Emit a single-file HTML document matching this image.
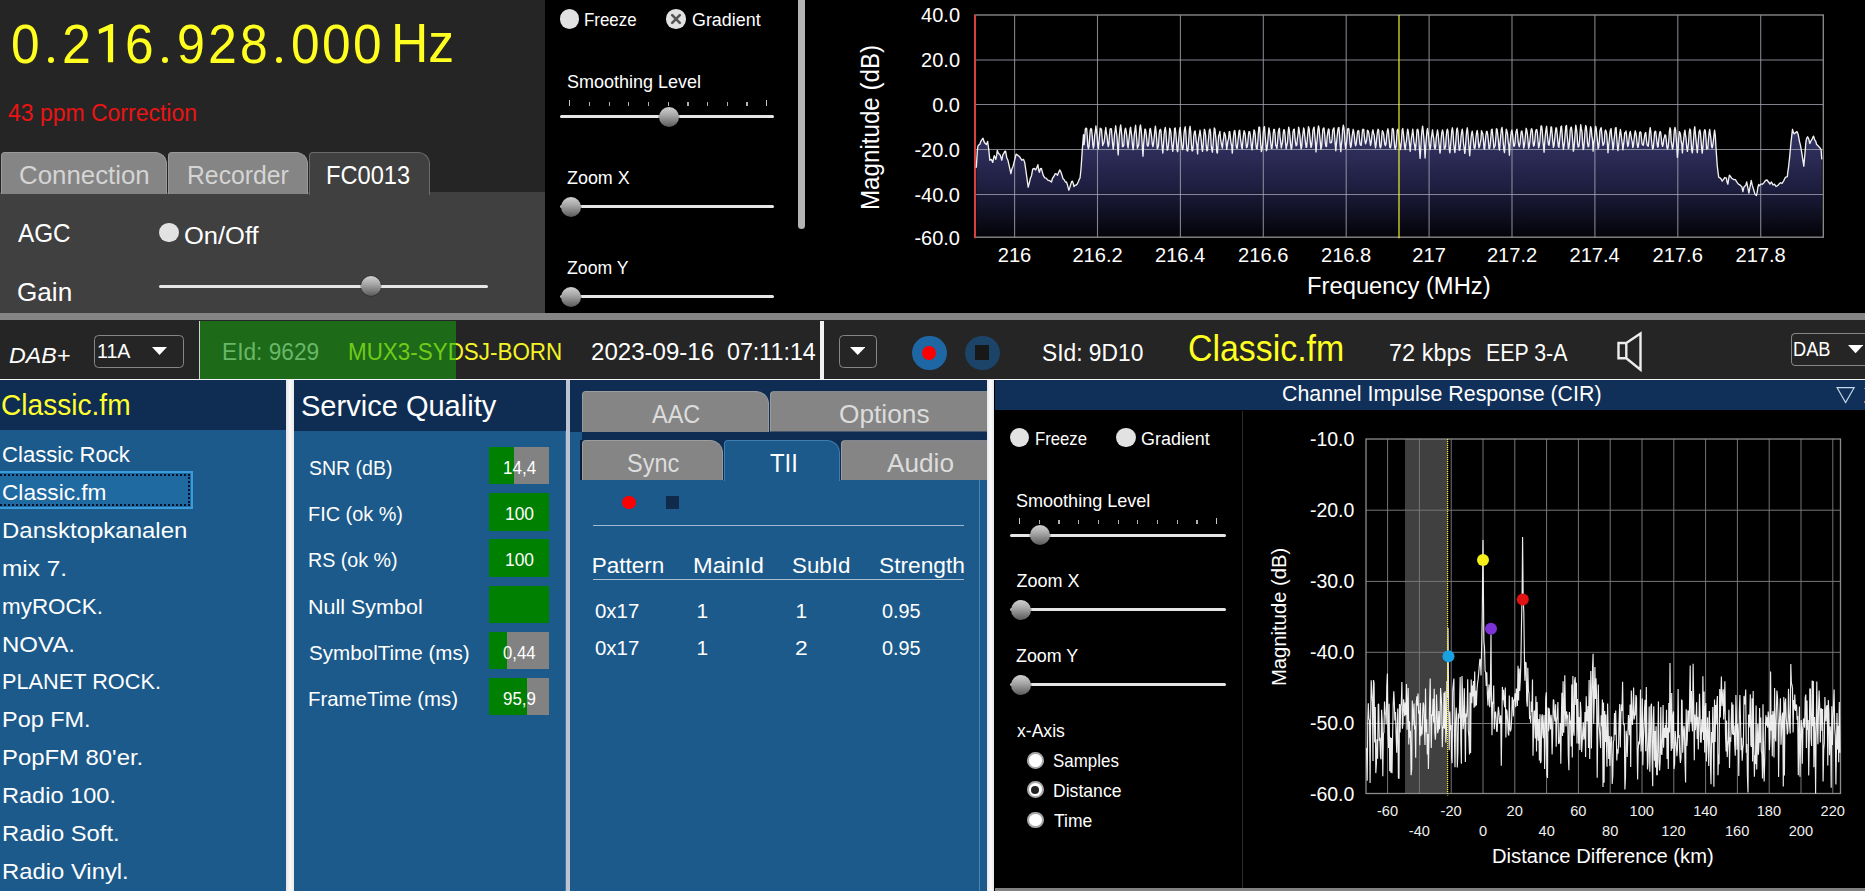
<!DOCTYPE html>
<html><head><meta charset="utf-8"><title>DAB</title>
<style>
html,body{margin:0;padding:0;background:#000;}
body{width:1865px;height:891px;overflow:hidden;position:relative;font-family:"Liberation Sans",sans-serif;}
#r{position:absolute;left:0;top:0;width:1865px;height:891px;overflow:hidden;}
#r div,#r span,#r svg{position:absolute;}
#r span{white-space:pre;display:block;}
</style></head><body><div id="r">
<div style="left:0.00px;top:0.00px;width:1865.00px;height:891.00px;background:#000;"></div>
<div style="left:0.00px;top:0.00px;width:545.00px;height:192.00px;background:#252525;"></div>
<div style="left:0.00px;top:192.00px;width:545.00px;height:121.00px;background:#404040;"></div>
<div style="left:0.00px;top:313.00px;width:1865.00px;height:7.20px;background:#858585;"></div>
<div style="left:0.00px;top:320.00px;width:1865.00px;height:59.20px;background:#252525;"></div>
<div style="left:0.00px;top:379.00px;width:1865.00px;height:1.30px;background:#f4f4f4;"></div>
<span style="left:10.59px;top:16.69px;font-size:55.00px;line-height:55.00px;color:#ffff20;transform:scaleX(0.9356);transform-origin:0 0;">0</span>
<div style="left:47.80px;top:57.10px;width:6.2px;height:6.2px;border-radius:50%;background:#ffff20"></div>
<span style="left:62.41px;top:16.69px;font-size:55.00px;line-height:55.00px;color:#ffff20;transform:scaleX(0.9431);transform-origin:0 0;">2</span>
<svg style="left:90px;top:15px" width="40" height="55" viewBox="90 15 40 55"><polygon points="110.7,24.1 113.15,24.1 113.15,62.3 107.9,62.3 107.9,30.4 99.1,33.9 98.6,29.6" fill="#ffff20"/></svg>
<span style="left:124.68px;top:16.69px;font-size:55.00px;line-height:55.00px;color:#ffff20;transform:scaleX(0.9345);transform-origin:0 0;">6</span>
<div style="left:162.00px;top:57.10px;width:6.2px;height:6.2px;border-radius:50%;background:#ffff20"></div>
<span style="left:177.10px;top:16.69px;font-size:55.00px;line-height:55.00px;color:#ffff20;transform:scaleX(0.9110);transform-origin:0 0;">9</span>
<span style="left:207.81px;top:16.69px;font-size:55.00px;line-height:55.00px;color:#ffff20;transform:scaleX(0.9431);transform-origin:0 0;">2</span>
<span style="left:239.61px;top:16.69px;font-size:55.00px;line-height:55.00px;color:#ffff20;transform:scaleX(0.9033);transform-origin:0 0;">8</span>
<div style="left:276.20px;top:57.10px;width:6.2px;height:6.2px;border-radius:50%;background:#ffff20"></div>
<span style="left:290.79px;top:16.69px;font-size:55.00px;line-height:55.00px;color:#ffff20;transform:scaleX(0.9356);transform-origin:0 0;">0</span>
<span style="left:321.99px;top:16.69px;font-size:55.00px;line-height:55.00px;color:#ffff20;transform:scaleX(0.9356);transform-origin:0 0;">0</span>
<span style="left:353.19px;top:16.69px;font-size:55.00px;line-height:55.00px;color:#ffff20;transform:scaleX(0.9356);transform-origin:0 0;">0</span>
<span style="left:390.77px;top:17.03px;font-size:54.60px;line-height:54.60px;color:#ffff20;transform:scaleX(0.9460);transform-origin:0 0;">Hz</span>
<span style="left:7.94px;top:102.37px;font-size:23.55px;line-height:23.55px;color:#ea1414;transform:scaleX(0.9756);transform-origin:0 0;">43 ppm Correction</span>
<div style="left:1.00px;top:152.00px;width:165.50px;height:41.50px;background:#858585;border:1px solid #9a9a9a;border-bottom:none;border-radius:4px 12px 0 0;box-sizing:border-box;"></div>
<div style="left:168.00px;top:152.00px;width:139.50px;height:41.50px;background:#858585;border:1px solid #9a9a9a;border-bottom:none;border-radius:4px 12px 0 0;box-sizing:border-box;"></div>
<div style="left:309.00px;top:152.00px;width:121.00px;height:42.50px;background:#404040;border:1px solid #6a6a6a;border-bottom:none;border-radius:4px 12px 0 0;box-sizing:border-box;"></div>
<span style="left:18.91px;top:163.35px;font-size:25.58px;line-height:25.58px;color:#d4d4d4;transform:scaleX(1.0103);transform-origin:0 0;">Connection</span>
<span style="left:186.52px;top:163.35px;font-size:25.58px;line-height:25.58px;color:#d4d4d4;transform:scaleX(0.9675);transform-origin:0 0;">Recorder</span>
<span style="left:325.71px;top:163.35px;font-size:25.58px;line-height:25.58px;color:#fff;transform:scaleX(0.9241);transform-origin:0 0;">FC0013</span>
<span style="left:18.00px;top:220.80px;font-size:25.87px;line-height:25.87px;color:#fff;transform:scaleX(0.9400);transform-origin:0 0;">AGC</span>
<div style="left:159.3px;top:222.8px;width:19.6px;height:19.6px;border-radius:50%;background:#e2e2e2"></div>
<span style="left:184.25px;top:223.83px;font-size:24.42px;line-height:24.42px;color:#fff;transform:scaleX(1.0447);transform-origin:0 0;">On/Off</span>
<span style="left:17.49px;top:279.74px;font-size:25.00px;line-height:25.00px;color:#fff;transform:scaleX(1.0446);transform-origin:0 0;">Gain</span>
<div style="left:159.30px;top:284.70px;width:329.20px;height:3px;border-radius:2px;background:#e6e6e6"></div>
<div style="left:361.20px;top:276.20px;width:20px;height:20px;border-radius:50%;background:linear-gradient(180deg,#d0d0d0 0%,#a8a8a8 40%,#5a5a5a 100%);box-shadow:0 0 0 0.6px rgba(0,0,0,.35)"></div>
<div style="left:559.70px;top:9.20px;width:19.60px;height:19.60px;border-radius:50%;background:#e2e2e2;"></div>
<span style="left:584.25px;top:11.17px;font-size:18.46px;line-height:18.46px;color:#fff;transform:scaleX(0.9168);transform-origin:0 0;">Freeze</span>
<div style="left:666.20px;top:9.20px;width:19.60px;height:19.60px;border-radius:50%;background:#e2e2e2;"></div>
<svg style="left:669px;top:12px" width="14" height="14" viewBox="0 0 14 14"><path d="M3.2 3.2L10.8 10.8M10.8 3.2L3.2 10.8" stroke="#555" stroke-width="2.6" stroke-linecap="round"/></svg>
<span style="left:691.70px;top:11.17px;font-size:18.46px;line-height:18.46px;color:#fff;transform:scaleX(0.9702);transform-origin:0 0;">Gradient</span>
<span style="left:566.69px;top:73.15px;font-size:18.60px;line-height:18.60px;color:#fff;transform:scaleX(0.9665);transform-origin:0 0;">Smoothing Level</span>
<div style="left:560.30px;top:115.00px;width:213.50px;height:3px;border-radius:2px;background:#e6e6e6"></div>
<div style="left:569.15px;top:100.30px;width:1.3px;height:5.8px;background:#c8c8c8"></div>
<div style="left:588.83px;top:102.10px;width:1.3px;height:4.0px;background:#b0b0b0"></div>
<div style="left:608.51px;top:102.10px;width:1.3px;height:4.0px;background:#b0b0b0"></div>
<div style="left:628.19px;top:102.10px;width:1.3px;height:4.0px;background:#b0b0b0"></div>
<div style="left:647.87px;top:102.10px;width:1.3px;height:4.0px;background:#b0b0b0"></div>
<div style="left:667.55px;top:102.10px;width:1.3px;height:4.0px;background:#b0b0b0"></div>
<div style="left:687.23px;top:102.10px;width:1.3px;height:4.0px;background:#b0b0b0"></div>
<div style="left:706.91px;top:102.10px;width:1.3px;height:4.0px;background:#b0b0b0"></div>
<div style="left:726.59px;top:102.10px;width:1.3px;height:4.0px;background:#b0b0b0"></div>
<div style="left:746.27px;top:102.10px;width:1.3px;height:4.0px;background:#b0b0b0"></div>
<div style="left:765.95px;top:100.30px;width:1.3px;height:5.8px;background:#c8c8c8"></div>
<div style="left:658.60px;top:106.50px;width:20px;height:20px;border-radius:50%;background:linear-gradient(180deg,#d0d0d0 0%,#a8a8a8 40%,#5a5a5a 100%);box-shadow:0 0 0 0.6px rgba(0,0,0,.35)"></div>
<span style="left:566.76px;top:169.14px;font-size:18.02px;line-height:18.02px;color:#fff;transform:scaleX(0.9939);transform-origin:0 0;">Zoom X</span>
<div style="left:560.30px;top:205.00px;width:213.30px;height:3px;border-radius:2px;background:#e6e6e6"></div>
<div style="left:560.50px;top:196.50px;width:20px;height:20px;border-radius:50%;background:linear-gradient(180deg,#d0d0d0 0%,#a8a8a8 40%,#5a5a5a 100%);box-shadow:0 0 0 0.6px rgba(0,0,0,.35)"></div>
<span style="left:566.77px;top:259.34px;font-size:18.02px;line-height:18.02px;color:#fff;transform:scaleX(0.9819);transform-origin:0 0;">Zoom Y</span>
<div style="left:560.30px;top:295.00px;width:213.30px;height:3px;border-radius:2px;background:#e6e6e6"></div>
<div style="left:560.50px;top:286.50px;width:20px;height:20px;border-radius:50%;background:linear-gradient(180deg,#d0d0d0 0%,#a8a8a8 40%,#5a5a5a 100%);box-shadow:0 0 0 0.6px rgba(0,0,0,.35)"></div>
<div style="left:798px;top:-8px;width:7px;height:237px;border-radius:4px;background:#b4b4b4"></div>
<svg style="left:0;top:0" width="1865" height="320" viewBox="0 0 1865 320"><defs><linearGradient id="g1" x1="0" y1="126" x2="0" y2="237" gradientUnits="userSpaceOnUse"><stop offset="0" stop-color="#38386c"/><stop offset="0.55" stop-color="#1e1e40"/><stop offset="1" stop-color="#030308"/></linearGradient></defs><polygon points="976.3,237.2 976.3,167.7 977.3,151.1 977.9,146.3 978.5,145.1 979.7,144.5 980.8,141.4 981.9,139.6 983.0,138.3 984.2,142.0 985.3,143.6 986.4,144.6 987.6,141.4 988.2,145.7 988.8,149.6 989.3,154.9 989.8,160.2 991.3,159.4 992.8,162.4 993.6,158.0 994.3,155.6 995.1,157.5 995.8,159.4 996.6,155.7 997.3,150.4 998.5,153.6 999.6,154.1 1000.7,156.6 1001.8,160.2 1002.8,154.9 1003.8,153.4 1004.7,151.3 1005.6,151.1 1006.7,157.4 1007.9,160.2 1010.9,173.7 1012.0,168.7 1013.1,166.2 1016.1,154.1 1018.0,155.4 1019.9,157.1 1021.8,160.2 1023.6,159.4 1024.8,162.9 1025.9,170.7 1028.2,187.2 1029.3,183.1 1030.4,178.2 1031.5,175.7 1032.7,169.2 1034.2,168.4 1035.7,169.9 1036.8,167.5 1037.9,164.7 1038.7,170.2 1039.4,172.2 1040.4,168.7 1041.4,168.4 1042.3,171.9 1043.2,175.2 1044.7,177.8 1046.2,178.2 1047.7,180.1 1049.2,180.5 1050.3,181.1 1051.5,182.0 1052.6,178.0 1053.7,176.7 1054.5,175.1 1055.2,173.7 1056.4,173.9 1057.5,175.2 1058.6,172.5 1059.7,169.9 1060.9,172.0 1062.0,175.2 1063.1,178.9 1064.2,179.7 1065.4,182.0 1066.5,182.0 1067.6,185.3 1068.8,190.2 1069.9,187.2 1071.0,183.5 1071.8,181.3 1072.5,181.2 1073.3,183.6 1074.0,186.5 1075.2,185.1 1076.3,185.0 1077.4,183.8 1078.5,181.2 1079.3,179.1 1080.0,178.2 1080.6,172.8 1081.1,167.7 1082.3,149.6 1083.5,134.6 1084.1,144.6 1084.7,138.9 1085.3,129.2 1086.0,128.1 1086.6,128.3 1087.2,135.5 1087.8,146.3 1088.4,148.7 1089.1,146.0 1089.7,136.8 1090.3,129.9 1090.9,128.4 1091.5,128.9 1092.2,135.8 1092.8,144.7 1093.4,148.2 1094.0,145.1 1094.6,135.9 1095.3,131.4 1095.9,126.0 1096.5,131.2 1097.1,136.0 1097.7,145.4 1098.4,148.8 1099.0,141.8 1099.6,134.9 1100.2,128.2 1100.8,128.6 1101.5,129.4 1102.1,137.8 1102.7,145.6 1103.3,143.9 1103.9,142.8 1104.6,138.0 1105.2,131.9 1105.8,127.5 1106.4,133.0 1107.0,135.8 1107.7,143.6 1108.3,146.6 1108.9,144.4 1109.5,135.1 1110.1,129.0 1110.8,128.6 1111.4,128.8 1112.0,136.7 1112.6,144.0 1113.2,149.1 1113.9,144.2 1114.5,134.5 1115.1,130.9 1115.7,125.8 1116.3,131.2 1117.0,136.6 1117.6,147.0 1118.2,154.9 1118.8,144.4 1119.4,134.9 1120.1,128.0 1120.7,125.0 1121.3,130.3 1121.9,136.6 1122.5,146.6 1123.2,146.6 1123.8,145.2 1124.4,135.3 1125.0,129.5 1125.6,128.2 1126.3,132.2 1126.9,136.8 1127.5,144.8 1128.1,147.9 1128.7,142.1 1129.4,135.4 1130.0,129.2 1130.6,127.1 1131.2,132.7 1131.8,136.9 1132.5,145.5 1133.1,149.7 1133.7,144.7 1134.3,134.3 1134.9,130.7 1135.6,125.3 1136.2,132.5 1136.8,140.1 1137.4,148.2 1138.0,146.6 1138.7,145.1 1139.3,134.4 1139.9,127.4 1140.5,125.0 1141.1,129.4 1141.8,137.9 1142.4,148.1 1143.0,156.2 1143.6,144.5 1144.2,137.4 1144.9,129.1 1145.5,129.4 1146.1,133.0 1146.7,138.6 1147.3,145.6 1148.0,146.1 1148.6,144.4 1149.2,136.4 1149.8,129.4 1150.4,128.4 1151.1,133.0 1151.7,137.9 1152.3,144.2 1152.9,146.7 1153.5,144.0 1154.2,137.2 1154.8,130.8 1155.4,126.2 1156.0,131.2 1156.6,138.4 1157.3,148.6 1157.9,147.6 1158.5,145.8 1159.1,134.9 1159.7,130.4 1160.4,129.3 1161.0,131.2 1161.6,140.9 1162.2,147.3 1162.8,153.0 1163.5,144.5 1164.1,135.0 1164.7,129.8 1165.3,127.5 1165.9,131.9 1166.6,142.4 1167.2,150.1 1167.8,149.7 1168.4,145.6 1169.0,138.0 1169.7,128.3 1170.3,129.4 1170.9,132.8 1171.5,140.9 1172.1,146.9 1172.8,151.3 1173.4,145.2 1174.0,138.2 1174.6,128.5 1175.2,128.0 1175.9,133.8 1176.5,142.3 1177.1,150.4 1177.7,151.7 1178.3,144.1 1179.0,136.2 1179.6,129.6 1180.2,127.4 1180.8,134.5 1181.4,141.2 1182.1,148.3 1182.7,149.7 1183.3,146.7 1183.9,135.1 1184.5,129.6 1185.2,126.8 1185.8,132.2 1186.4,143.3 1187.0,150.6 1187.6,151.1 1188.3,147.3 1188.9,137.6 1189.5,129.1 1190.1,126.3 1190.7,132.0 1191.4,144.0 1192.0,150.8 1192.6,150.8 1193.2,146.2 1193.8,135.9 1194.5,131.7 1195.1,130.9 1195.7,135.9 1196.3,142.2 1196.9,145.4 1197.6,153.9 1198.2,142.8 1198.8,137.4 1199.4,134.5 1200.0,130.1 1200.7,135.4 1201.3,140.8 1201.9,148.2 1202.5,151.4 1203.1,146.2 1203.8,135.0 1204.4,129.3 1205.0,131.0 1205.6,135.1 1206.2,145.2 1206.9,150.8 1207.5,150.2 1208.1,143.5 1208.7,137.1 1209.3,130.5 1210.0,129.0 1210.6,132.8 1211.2,145.5 1211.8,149.3 1212.4,152.2 1213.1,144.9 1213.7,135.7 1214.3,128.0 1214.9,129.1 1215.5,134.5 1216.2,141.6 1216.8,152.2 1217.4,153.1 1218.0,145.3 1218.6,136.0 1219.3,134.0 1219.9,131.5 1220.5,138.4 1221.1,142.3 1221.7,145.4 1222.4,148.0 1223.0,141.6 1223.6,138.5 1224.2,132.4 1224.8,133.3 1225.5,136.1 1226.1,142.5 1226.7,149.4 1227.3,145.6 1227.9,141.1 1228.6,138.7 1229.2,131.6 1229.8,131.7 1230.4,137.6 1231.0,143.0 1231.7,146.0 1232.3,153.1 1232.9,144.0 1233.5,136.6 1234.1,131.5 1234.8,130.5 1235.4,135.0 1236.0,144.5 1236.6,148.1 1237.2,148.3 1237.9,141.8 1238.5,135.9 1239.1,130.8 1239.7,130.3 1240.3,137.5 1241.0,142.4 1241.6,147.1 1242.2,148.8 1242.8,141.7 1243.4,135.6 1244.1,130.7 1244.7,132.2 1245.3,135.7 1245.9,142.0 1246.5,147.7 1247.2,146.8 1247.8,143.1 1248.4,135.4 1249.0,131.7 1249.6,131.6 1250.3,135.2 1250.9,141.9 1251.5,147.5 1252.1,149.8 1252.7,142.5 1253.4,135.9 1254.0,129.9 1254.6,131.1 1255.2,134.9 1255.8,143.2 1256.5,148.5 1257.1,148.8 1257.7,143.6 1258.3,133.7 1258.9,127.2 1259.6,127.1 1260.2,135.3 1260.8,145.4 1261.4,151.6 1262.0,149.5 1262.7,143.2 1263.3,132.3 1263.9,127.9 1264.5,126.6 1265.1,135.7 1265.8,142.7 1266.4,150.7 1267.0,148.9 1267.6,143.7 1268.2,135.6 1268.9,127.9 1269.5,130.6 1270.1,135.6 1270.7,142.1 1271.3,148.2 1272.0,148.2 1272.6,142.3 1273.2,133.9 1273.8,129.4 1274.4,129.5 1275.1,134.5 1275.7,145.1 1276.3,146.3 1276.9,148.4 1277.5,143.1 1278.2,132.7 1278.8,129.8 1279.4,128.3 1280.0,137.0 1280.6,141.2 1281.3,147.9 1281.9,144.9 1282.5,142.4 1283.1,134.7 1283.7,129.8 1284.4,129.9 1285.0,135.0 1285.6,143.2 1286.2,148.9 1286.8,145.5 1287.5,142.3 1288.1,132.6 1288.7,127.2 1289.3,130.0 1289.9,135.8 1290.6,144.4 1291.2,149.1 1291.8,148.0 1292.4,140.6 1293.0,132.0 1293.7,129.3 1294.3,129.2 1294.9,137.3 1295.5,142.5 1296.1,145.8 1296.8,145.2 1297.4,138.5 1298.0,134.6 1298.6,127.2 1299.2,130.0 1299.9,135.3 1300.5,144.0 1301.1,148.8 1301.7,146.9 1302.3,138.3 1303.0,133.2 1303.6,128.0 1304.2,129.6 1304.8,136.5 1305.4,141.9 1306.1,147.3 1306.7,147.0 1307.3,139.3 1307.9,132.2 1308.5,126.6 1309.2,129.0 1309.8,136.1 1310.4,142.6 1311.0,147.4 1311.6,145.8 1312.3,139.4 1312.9,130.6 1313.5,128.2 1314.1,127.2 1314.7,134.8 1315.4,142.1 1316.0,151.9 1316.6,144.9 1317.2,139.5 1317.8,130.3 1318.5,125.9 1319.1,128.4 1319.7,135.9 1320.3,142.0 1320.9,149.3 1321.6,146.4 1322.2,138.6 1322.8,129.8 1323.4,128.1 1324.0,128.0 1324.7,134.5 1325.3,142.9 1325.9,146.3 1326.5,146.5 1327.1,137.6 1327.8,132.3 1328.4,129.0 1329.0,129.4 1329.6,137.7 1330.2,142.9 1330.9,142.7 1331.5,142.5 1332.1,139.1 1332.7,130.3 1333.3,128.9 1334.0,127.9 1334.6,135.8 1335.2,144.0 1335.8,150.8 1336.4,144.0 1337.1,137.0 1337.7,130.9 1338.3,128.0 1338.9,127.4 1339.5,134.7 1340.2,145.2 1340.8,151.6 1341.4,144.3 1342.0,140.2 1342.6,129.8 1343.3,125.2 1343.9,127.4 1344.5,134.3 1345.1,144.1 1345.7,148.6 1346.4,143.9 1347.0,137.7 1347.6,129.2 1348.2,128.5 1348.8,128.8 1349.5,135.2 1350.1,144.0 1350.7,147.4 1351.3,145.2 1351.9,138.1 1352.6,132.8 1353.2,129.3 1353.8,132.2 1354.4,136.4 1355.0,142.9 1355.7,145.9 1356.3,143.3 1356.9,137.7 1357.5,132.0 1358.1,130.5 1358.8,131.1 1359.4,138.0 1360.0,144.2 1360.6,145.0 1361.2,145.4 1361.9,137.3 1362.5,130.0 1363.1,129.3 1363.7,129.5 1364.3,135.6 1365.0,141.3 1365.6,143.9 1366.2,141.8 1366.8,139.1 1367.4,130.3 1368.1,130.8 1368.7,132.6 1369.3,136.5 1369.9,141.0 1370.5,145.5 1371.2,142.4 1371.8,136.9 1372.4,131.7 1373.0,129.8 1373.6,133.5 1374.3,135.9 1374.9,143.1 1375.5,147.8 1376.1,144.8 1376.7,138.6 1377.4,131.9 1378.0,129.3 1378.6,130.0 1379.2,136.3 1379.8,146.0 1380.5,147.9 1381.1,145.7 1381.7,137.0 1382.3,130.7 1382.9,131.6 1383.6,133.9 1384.2,139.6 1384.8,144.3 1385.4,145.7 1386.0,143.9 1386.7,136.3 1387.3,131.2 1387.9,128.8 1388.5,131.7 1389.1,139.3 1389.8,147.4 1390.4,147.8 1391.0,145.4 1391.6,139.5 1392.2,129.1 1392.9,128.4 1393.5,130.2 1394.1,139.7 1394.7,147.0 1395.3,149.2 1396.0,146.5 1396.6,139.5 1397.2,130.3 1397.8,129.2 1398.4,131.3 1399.1,140.3 1399.7,144.7 1400.3,149.6 1400.9,146.8 1401.5,140.0 1402.2,129.9 1402.8,128.5 1403.4,133.3 1404.0,139.7 1404.6,147.0 1405.3,149.5 1405.9,143.7 1406.5,140.5 1407.1,133.5 1407.7,129.1 1408.4,132.2 1409.0,138.5 1409.6,145.0 1410.2,151.3 1410.8,145.0 1411.5,137.6 1412.1,134.7 1412.7,129.1 1413.3,133.7 1413.9,141.8 1414.6,145.2 1415.2,150.1 1415.8,146.1 1416.4,139.2 1417.0,130.0 1417.7,129.3 1418.3,131.4 1418.9,139.0 1419.5,150.1 1420.1,158.4 1420.8,147.6 1421.4,137.2 1422.0,130.4 1422.6,126.1 1423.2,130.7 1423.9,138.7 1424.5,147.7 1425.1,158.0 1425.7,146.2 1426.3,138.5 1427.0,130.6 1427.6,128.5 1428.2,132.4 1428.8,139.3 1429.4,145.3 1430.1,149.5 1430.7,145.9 1431.3,138.4 1431.9,134.4 1432.5,129.8 1433.2,135.4 1433.8,139.4 1434.4,146.9 1435.0,149.1 1435.6,146.8 1436.3,137.0 1436.9,133.7 1437.5,129.9 1438.1,133.4 1438.7,140.6 1439.4,147.3 1440.0,153.1 1440.6,147.8 1441.2,138.8 1441.8,132.8 1442.5,130.0 1443.1,132.3 1443.7,139.6 1444.3,148.9 1444.9,148.6 1445.6,146.5 1446.2,136.8 1446.8,131.0 1447.4,129.1 1448.0,131.4 1448.7,141.4 1449.3,149.8 1449.9,152.8 1450.5,146.9 1451.1,139.3 1451.8,130.3 1452.4,127.8 1453.0,131.6 1453.6,142.3 1454.2,148.3 1454.9,152.5 1455.5,146.5 1456.1,137.2 1456.7,129.4 1457.3,128.0 1458.0,132.7 1458.6,142.7 1459.2,150.1 1459.8,150.2 1460.4,145.0 1461.1,136.3 1461.7,131.6 1462.3,129.2 1462.9,134.0 1463.5,143.0 1464.2,148.3 1464.8,153.4 1465.4,148.3 1466.0,138.6 1466.6,131.3 1467.3,127.8 1467.9,132.8 1468.5,140.6 1469.1,148.9 1469.7,155.8 1470.4,146.7 1471.0,138.5 1471.6,133.6 1472.2,131.1 1472.8,134.9 1473.5,141.1 1474.1,147.6 1474.7,148.6 1475.3,146.3 1475.9,138.0 1476.6,132.7 1477.2,130.4 1477.8,134.2 1478.4,143.1 1479.0,147.9 1479.7,145.9 1480.3,142.5 1480.9,139.7 1481.5,130.7 1482.1,132.2 1482.8,133.7 1483.4,139.8 1484.0,148.4 1484.6,149.2 1485.2,142.3 1485.9,135.4 1486.5,131.5 1487.1,131.4 1487.7,134.6 1488.3,140.2 1489.0,148.5 1489.6,148.4 1490.2,144.9 1490.8,137.9 1491.4,130.0 1492.1,129.1 1492.7,135.1 1493.3,140.4 1493.9,148.2 1494.5,147.0 1495.2,145.4 1495.8,138.1 1496.4,128.8 1497.0,129.1 1497.6,133.1 1498.3,139.8 1498.9,147.5 1499.5,150.0 1500.1,143.0 1500.7,135.8 1501.4,129.3 1502.0,127.4 1502.6,132.5 1503.2,142.4 1503.8,149.3 1504.5,152.5 1505.1,144.8 1505.7,135.6 1506.3,129.1 1506.9,130.9 1507.6,134.3 1508.2,142.1 1508.8,145.4 1509.4,155.3 1510.0,144.0 1510.7,136.6 1511.3,131.9 1511.9,129.9 1512.5,133.6 1513.1,139.6 1513.8,146.2 1514.4,146.0 1515.0,143.1 1515.6,135.0 1516.2,131.1 1516.9,129.1 1517.5,133.3 1518.1,141.2 1518.7,144.7 1519.3,146.7 1520.0,143.7 1520.6,137.0 1521.2,131.8 1521.8,130.9 1522.4,133.3 1523.1,140.7 1523.7,148.1 1524.3,145.8 1524.9,141.3 1525.5,134.2 1526.2,128.3 1526.8,130.2 1527.4,134.1 1528.0,140.8 1528.6,148.2 1529.3,146.0 1529.9,141.2 1530.5,134.7 1531.1,129.6 1531.7,128.7 1532.4,131.5 1533.0,142.2 1533.6,146.2 1534.2,145.4 1534.8,140.7 1535.5,132.5 1536.1,129.8 1536.7,129.5 1537.3,132.3 1537.9,140.0 1538.6,147.8 1539.2,146.1 1539.8,141.9 1540.4,133.2 1541.0,126.0 1541.7,126.2 1542.3,131.6 1542.9,141.1 1543.5,146.3 1544.1,152.2 1544.8,141.1 1545.4,134.4 1546.0,129.2 1546.6,126.3 1547.2,133.1 1547.9,140.3 1548.5,145.0 1549.1,145.2 1549.7,140.1 1550.3,134.6 1551.0,126.9 1551.6,127.2 1552.2,134.0 1552.8,142.0 1553.4,147.3 1554.1,145.3 1554.7,138.9 1555.3,133.0 1555.9,127.9 1556.5,127.9 1557.2,134.4 1557.8,141.4 1558.4,146.9 1559.0,147.3 1559.6,139.9 1560.3,133.2 1560.9,126.7 1561.5,126.1 1562.1,133.0 1562.7,143.3 1563.4,149.3 1564.0,146.1 1564.6,141.0 1565.2,133.6 1565.8,126.4 1566.5,125.5 1567.1,135.0 1567.7,140.3 1568.3,148.5 1568.9,147.6 1569.6,141.2 1570.2,130.6 1570.8,127.7 1571.4,127.1 1572.0,131.8 1572.7,141.3 1573.3,151.2 1573.9,149.0 1574.5,142.1 1575.1,133.6 1575.8,125.1 1576.4,128.3 1577.0,133.1 1577.6,143.6 1578.2,147.1 1578.9,146.3 1579.5,141.2 1580.1,132.6 1580.7,124.7 1581.3,128.4 1582.0,132.1 1582.6,143.6 1583.2,149.6 1583.8,148.0 1584.4,140.4 1585.1,130.8 1585.7,125.5 1586.3,127.1 1586.9,132.9 1587.5,143.0 1588.2,146.9 1588.8,146.1 1589.4,139.5 1590.0,132.7 1590.6,126.6 1591.3,128.6 1591.9,136.1 1592.5,139.9 1593.1,151.1 1593.7,143.6 1594.4,139.4 1595.0,132.0 1595.6,126.3 1596.2,128.2 1596.8,134.4 1597.5,141.6 1598.1,148.8 1598.7,147.3 1599.3,141.4 1599.9,131.1 1600.6,128.6 1601.2,127.7 1601.8,133.4 1602.4,140.9 1603.0,145.5 1603.7,144.4 1604.3,141.9 1604.9,132.5 1605.5,130.0 1606.1,131.1 1606.8,134.7 1607.4,144.5 1608.0,152.8 1608.6,145.9 1609.2,140.9 1609.9,132.9 1610.5,129.5 1611.1,128.6 1611.7,137.3 1612.3,141.5 1613.0,149.7 1613.6,145.9 1614.2,138.8 1614.8,134.4 1615.4,128.0 1616.1,127.6 1616.7,136.9 1617.3,144.9 1617.9,150.6 1618.5,146.7 1619.2,139.5 1619.8,133.1 1620.4,129.5 1621.0,133.3 1621.6,138.6 1622.3,143.9 1622.9,149.8 1623.5,145.2 1624.1,140.2 1624.7,132.8 1625.4,133.1 1626.0,131.0 1626.6,135.7 1627.2,142.1 1627.8,146.6 1628.5,144.5 1629.1,138.2 1629.7,133.1 1630.3,131.4 1630.9,135.0 1631.6,139.2 1632.2,141.8 1632.8,147.5 1633.4,145.8 1634.0,140.2 1634.7,133.6 1635.3,130.8 1635.9,133.1 1636.5,136.9 1637.1,143.6 1637.8,147.4 1638.4,146.1 1639.0,141.0 1639.6,132.7 1640.2,131.8 1640.9,132.6 1641.5,138.8 1642.1,144.0 1642.7,144.9 1643.3,145.3 1644.0,140.1 1644.6,136.1 1645.2,133.1 1645.8,132.5 1646.4,139.8 1647.1,145.0 1647.7,145.9 1648.3,146.2 1648.9,139.8 1649.5,132.2 1650.2,127.7 1650.8,131.8 1651.4,139.0 1652.0,144.5 1652.6,148.9 1653.3,148.1 1653.9,141.3 1654.5,133.0 1655.1,131.1 1655.7,131.5 1656.4,137.3 1657.0,142.7 1657.6,147.0 1658.2,146.8 1658.8,139.0 1659.5,133.6 1660.1,131.4 1660.7,132.6 1661.3,137.9 1661.9,143.8 1662.6,146.4 1663.2,144.3 1663.8,138.9 1664.4,137.1 1665.0,134.8 1665.7,135.4 1666.3,140.6 1666.9,147.3 1667.5,149.0 1668.1,147.3 1668.8,140.3 1669.4,131.5 1670.0,127.8 1670.6,130.0 1671.2,140.9 1671.9,145.5 1672.5,149.0 1673.1,146.5 1673.7,140.1 1674.3,130.9 1675.0,127.5 1675.6,129.9 1676.2,137.9 1676.8,145.9 1677.4,157.4 1678.1,149.4 1678.7,138.5 1679.3,131.7 1679.9,132.5 1680.5,134.6 1681.2,141.5 1681.8,144.3 1682.4,152.9 1683.0,144.2 1683.6,140.1 1684.3,133.2 1684.9,130.2 1685.5,134.8 1686.1,138.7 1686.7,147.3 1687.4,151.4 1688.0,147.4 1688.6,141.7 1689.2,132.7 1689.8,129.0 1690.5,130.4 1691.1,140.3 1691.7,150.4 1692.3,152.9 1692.9,147.5 1693.6,139.1 1694.2,130.3 1694.8,126.8 1695.4,133.4 1696.0,139.6 1696.7,147.2 1697.3,152.6 1697.9,146.6 1698.5,138.2 1699.1,131.8 1699.8,129.9 1700.4,132.6 1701.0,139.8 1701.6,147.4 1702.2,153.1 1702.9,147.2 1703.5,139.3 1704.1,132.2 1704.7,129.8 1705.3,130.5 1706.0,138.8 1706.6,149.0 1707.2,148.3 1707.8,148.4 1708.4,140.4 1709.1,132.7 1709.7,129.4 1710.3,134.2 1710.9,138.4 1711.5,146.0 1712.2,147.9 1712.8,145.1 1713.4,140.6 1714.0,134.7 1714.6,130.2 1715.3,135.3 1716.1,149.6 1717.3,166.2 1718.1,172.8 1718.8,177.4 1720.0,177.8 1721.1,178.9 1722.2,181.1 1723.3,179.7 1724.8,177.5 1726.4,178.2 1727.1,182.3 1727.9,184.2 1728.6,179.4 1729.4,175.2 1730.5,176.4 1731.6,178.2 1733.5,179.5 1735.4,179.7 1736.9,182.1 1738.4,184.2 1739.5,184.6 1740.6,185.7 1741.8,186.5 1742.9,191.7 1744.0,186.9 1745.2,185.7 1745.9,184.8 1746.7,182.0 1747.8,187.7 1748.9,193.2 1751.2,180.5 1752.3,185.4 1753.4,188.7 1754.9,194.1 1756.4,195.5 1757.2,192.2 1757.9,187.2 1758.7,184.5 1759.4,185.7 1760.9,184.1 1762.4,184.2 1763.9,182.7 1765.5,180.5 1767.0,180.0 1768.5,182.0 1770.0,184.0 1771.5,182.0 1773.0,185.0 1774.5,184.2 1776.0,186.5 1777.5,185.7 1779.0,184.1 1780.5,182.7 1782.0,183.5 1783.5,181.2 1785.4,177.3 1787.3,176.7 1787.8,172.1 1788.3,169.2 1788.9,163.7 1789.5,158.6 1791.0,142.1 1792.5,129.3 1793.4,132.6 1794.3,133.8 1795.7,132.6 1797.0,131.6 1798.2,134.5 1799.3,140.6 1800.4,145.2 1801.5,151.1 1803.8,166.2 1805.3,149.6 1805.7,144.3 1806.1,140.6 1806.8,137.8 1807.6,136.8 1808.7,138.8 1809.8,143.6 1810.9,141.0 1812.1,139.1 1812.8,137.4 1813.6,136.1 1814.7,139.9 1815.8,141.4 1816.6,144.5 1817.3,145.1 1818.5,146.3 1819.6,147.4 1820.3,148.3 1821.1,149.6 1821.5,155.7 1821.8,159.4 1821.8,237.2" fill="url(#g1)"/><line x1="975.0" x2="1823.3" y1="60" y2="60" stroke="rgba(165,165,180,0.78)" stroke-width="1.1"/><line x1="975.0" x2="1823.3" y1="104.5" y2="104.5" stroke="rgba(165,165,180,0.78)" stroke-width="1.1"/><line x1="975.0" x2="1823.3" y1="149.5" y2="149.5" stroke="rgba(165,165,180,0.78)" stroke-width="1.1"/><line x1="975.0" x2="1823.3" y1="194.5" y2="194.5" stroke="rgba(165,165,180,0.78)" stroke-width="1.1"/><line x1="1014.6" x2="1014.6" y1="15.0" y2="237.2" stroke="rgba(165,165,180,0.78)" stroke-width="1.1"/><line x1="1097.5" x2="1097.5" y1="15.0" y2="237.2" stroke="rgba(165,165,180,0.78)" stroke-width="1.1"/><line x1="1180.4" x2="1180.4" y1="15.0" y2="237.2" stroke="rgba(165,165,180,0.78)" stroke-width="1.1"/><line x1="1263.3" x2="1263.3" y1="15.0" y2="237.2" stroke="rgba(165,165,180,0.78)" stroke-width="1.1"/><line x1="1346.2" x2="1346.2" y1="15.0" y2="237.2" stroke="rgba(165,165,180,0.78)" stroke-width="1.1"/><line x1="1429.1" x2="1429.1" y1="15.0" y2="237.2" stroke="rgba(165,165,180,0.78)" stroke-width="1.1"/><line x1="1512.0" x2="1512.0" y1="15.0" y2="237.2" stroke="rgba(165,165,180,0.78)" stroke-width="1.1"/><line x1="1594.9" x2="1594.9" y1="15.0" y2="237.2" stroke="rgba(165,165,180,0.78)" stroke-width="1.1"/><line x1="1677.8" x2="1677.8" y1="15.0" y2="237.2" stroke="rgba(165,165,180,0.78)" stroke-width="1.1"/><line x1="1760.7" x2="1760.7" y1="15.0" y2="237.2" stroke="rgba(165,165,180,0.78)" stroke-width="1.1"/><rect x="975.0" y="15.0" width="848.3" height="222.2" fill="none" stroke="#8c8c8c" stroke-width="1.35"/><line x1="975.0" x2="975.0" y1="15.0" y2="238.2" stroke="#d84040" stroke-width="2"/><polyline points="976.3,167.7 977.3,151.1 977.9,146.3 978.5,145.1 979.7,144.5 980.8,141.4 981.9,139.6 983.0,138.3 984.2,142.0 985.3,143.6 986.4,144.6 987.6,141.4 988.2,145.7 988.8,149.6 989.3,154.9 989.8,160.2 991.3,159.4 992.8,162.4 993.6,158.0 994.3,155.6 995.1,157.5 995.8,159.4 996.6,155.7 997.3,150.4 998.5,153.6 999.6,154.1 1000.7,156.6 1001.8,160.2 1002.8,154.9 1003.8,153.4 1004.7,151.3 1005.6,151.1 1006.7,157.4 1007.9,160.2 1010.9,173.7 1012.0,168.7 1013.1,166.2 1016.1,154.1 1018.0,155.4 1019.9,157.1 1021.8,160.2 1023.6,159.4 1024.8,162.9 1025.9,170.7 1028.2,187.2 1029.3,183.1 1030.4,178.2 1031.5,175.7 1032.7,169.2 1034.2,168.4 1035.7,169.9 1036.8,167.5 1037.9,164.7 1038.7,170.2 1039.4,172.2 1040.4,168.7 1041.4,168.4 1042.3,171.9 1043.2,175.2 1044.7,177.8 1046.2,178.2 1047.7,180.1 1049.2,180.5 1050.3,181.1 1051.5,182.0 1052.6,178.0 1053.7,176.7 1054.5,175.1 1055.2,173.7 1056.4,173.9 1057.5,175.2 1058.6,172.5 1059.7,169.9 1060.9,172.0 1062.0,175.2 1063.1,178.9 1064.2,179.7 1065.4,182.0 1066.5,182.0 1067.6,185.3 1068.8,190.2 1069.9,187.2 1071.0,183.5 1071.8,181.3 1072.5,181.2 1073.3,183.6 1074.0,186.5 1075.2,185.1 1076.3,185.0 1077.4,183.8 1078.5,181.2 1079.3,179.1 1080.0,178.2 1080.6,172.8 1081.1,167.7 1082.3,149.6 1083.5,134.6 1084.1,144.6 1084.7,138.9 1085.3,129.2 1086.0,128.1 1086.6,128.3 1087.2,135.5 1087.8,146.3 1088.4,148.7 1089.1,146.0 1089.7,136.8 1090.3,129.9 1090.9,128.4 1091.5,128.9 1092.2,135.8 1092.8,144.7 1093.4,148.2 1094.0,145.1 1094.6,135.9 1095.3,131.4 1095.9,126.0 1096.5,131.2 1097.1,136.0 1097.7,145.4 1098.4,148.8 1099.0,141.8 1099.6,134.9 1100.2,128.2 1100.8,128.6 1101.5,129.4 1102.1,137.8 1102.7,145.6 1103.3,143.9 1103.9,142.8 1104.6,138.0 1105.2,131.9 1105.8,127.5 1106.4,133.0 1107.0,135.8 1107.7,143.6 1108.3,146.6 1108.9,144.4 1109.5,135.1 1110.1,129.0 1110.8,128.6 1111.4,128.8 1112.0,136.7 1112.6,144.0 1113.2,149.1 1113.9,144.2 1114.5,134.5 1115.1,130.9 1115.7,125.8 1116.3,131.2 1117.0,136.6 1117.6,147.0 1118.2,154.9 1118.8,144.4 1119.4,134.9 1120.1,128.0 1120.7,125.0 1121.3,130.3 1121.9,136.6 1122.5,146.6 1123.2,146.6 1123.8,145.2 1124.4,135.3 1125.0,129.5 1125.6,128.2 1126.3,132.2 1126.9,136.8 1127.5,144.8 1128.1,147.9 1128.7,142.1 1129.4,135.4 1130.0,129.2 1130.6,127.1 1131.2,132.7 1131.8,136.9 1132.5,145.5 1133.1,149.7 1133.7,144.7 1134.3,134.3 1134.9,130.7 1135.6,125.3 1136.2,132.5 1136.8,140.1 1137.4,148.2 1138.0,146.6 1138.7,145.1 1139.3,134.4 1139.9,127.4 1140.5,125.0 1141.1,129.4 1141.8,137.9 1142.4,148.1 1143.0,156.2 1143.6,144.5 1144.2,137.4 1144.9,129.1 1145.5,129.4 1146.1,133.0 1146.7,138.6 1147.3,145.6 1148.0,146.1 1148.6,144.4 1149.2,136.4 1149.8,129.4 1150.4,128.4 1151.1,133.0 1151.7,137.9 1152.3,144.2 1152.9,146.7 1153.5,144.0 1154.2,137.2 1154.8,130.8 1155.4,126.2 1156.0,131.2 1156.6,138.4 1157.3,148.6 1157.9,147.6 1158.5,145.8 1159.1,134.9 1159.7,130.4 1160.4,129.3 1161.0,131.2 1161.6,140.9 1162.2,147.3 1162.8,153.0 1163.5,144.5 1164.1,135.0 1164.7,129.8 1165.3,127.5 1165.9,131.9 1166.6,142.4 1167.2,150.1 1167.8,149.7 1168.4,145.6 1169.0,138.0 1169.7,128.3 1170.3,129.4 1170.9,132.8 1171.5,140.9 1172.1,146.9 1172.8,151.3 1173.4,145.2 1174.0,138.2 1174.6,128.5 1175.2,128.0 1175.9,133.8 1176.5,142.3 1177.1,150.4 1177.7,151.7 1178.3,144.1 1179.0,136.2 1179.6,129.6 1180.2,127.4 1180.8,134.5 1181.4,141.2 1182.1,148.3 1182.7,149.7 1183.3,146.7 1183.9,135.1 1184.5,129.6 1185.2,126.8 1185.8,132.2 1186.4,143.3 1187.0,150.6 1187.6,151.1 1188.3,147.3 1188.9,137.6 1189.5,129.1 1190.1,126.3 1190.7,132.0 1191.4,144.0 1192.0,150.8 1192.6,150.8 1193.2,146.2 1193.8,135.9 1194.5,131.7 1195.1,130.9 1195.7,135.9 1196.3,142.2 1196.9,145.4 1197.6,153.9 1198.2,142.8 1198.8,137.4 1199.4,134.5 1200.0,130.1 1200.7,135.4 1201.3,140.8 1201.9,148.2 1202.5,151.4 1203.1,146.2 1203.8,135.0 1204.4,129.3 1205.0,131.0 1205.6,135.1 1206.2,145.2 1206.9,150.8 1207.5,150.2 1208.1,143.5 1208.7,137.1 1209.3,130.5 1210.0,129.0 1210.6,132.8 1211.2,145.5 1211.8,149.3 1212.4,152.2 1213.1,144.9 1213.7,135.7 1214.3,128.0 1214.9,129.1 1215.5,134.5 1216.2,141.6 1216.8,152.2 1217.4,153.1 1218.0,145.3 1218.6,136.0 1219.3,134.0 1219.9,131.5 1220.5,138.4 1221.1,142.3 1221.7,145.4 1222.4,148.0 1223.0,141.6 1223.6,138.5 1224.2,132.4 1224.8,133.3 1225.5,136.1 1226.1,142.5 1226.7,149.4 1227.3,145.6 1227.9,141.1 1228.6,138.7 1229.2,131.6 1229.8,131.7 1230.4,137.6 1231.0,143.0 1231.7,146.0 1232.3,153.1 1232.9,144.0 1233.5,136.6 1234.1,131.5 1234.8,130.5 1235.4,135.0 1236.0,144.5 1236.6,148.1 1237.2,148.3 1237.9,141.8 1238.5,135.9 1239.1,130.8 1239.7,130.3 1240.3,137.5 1241.0,142.4 1241.6,147.1 1242.2,148.8 1242.8,141.7 1243.4,135.6 1244.1,130.7 1244.7,132.2 1245.3,135.7 1245.9,142.0 1246.5,147.7 1247.2,146.8 1247.8,143.1 1248.4,135.4 1249.0,131.7 1249.6,131.6 1250.3,135.2 1250.9,141.9 1251.5,147.5 1252.1,149.8 1252.7,142.5 1253.4,135.9 1254.0,129.9 1254.6,131.1 1255.2,134.9 1255.8,143.2 1256.5,148.5 1257.1,148.8 1257.7,143.6 1258.3,133.7 1258.9,127.2 1259.6,127.1 1260.2,135.3 1260.8,145.4 1261.4,151.6 1262.0,149.5 1262.7,143.2 1263.3,132.3 1263.9,127.9 1264.5,126.6 1265.1,135.7 1265.8,142.7 1266.4,150.7 1267.0,148.9 1267.6,143.7 1268.2,135.6 1268.9,127.9 1269.5,130.6 1270.1,135.6 1270.7,142.1 1271.3,148.2 1272.0,148.2 1272.6,142.3 1273.2,133.9 1273.8,129.4 1274.4,129.5 1275.1,134.5 1275.7,145.1 1276.3,146.3 1276.9,148.4 1277.5,143.1 1278.2,132.7 1278.8,129.8 1279.4,128.3 1280.0,137.0 1280.6,141.2 1281.3,147.9 1281.9,144.9 1282.5,142.4 1283.1,134.7 1283.7,129.8 1284.4,129.9 1285.0,135.0 1285.6,143.2 1286.2,148.9 1286.8,145.5 1287.5,142.3 1288.1,132.6 1288.7,127.2 1289.3,130.0 1289.9,135.8 1290.6,144.4 1291.2,149.1 1291.8,148.0 1292.4,140.6 1293.0,132.0 1293.7,129.3 1294.3,129.2 1294.9,137.3 1295.5,142.5 1296.1,145.8 1296.8,145.2 1297.4,138.5 1298.0,134.6 1298.6,127.2 1299.2,130.0 1299.9,135.3 1300.5,144.0 1301.1,148.8 1301.7,146.9 1302.3,138.3 1303.0,133.2 1303.6,128.0 1304.2,129.6 1304.8,136.5 1305.4,141.9 1306.1,147.3 1306.7,147.0 1307.3,139.3 1307.9,132.2 1308.5,126.6 1309.2,129.0 1309.8,136.1 1310.4,142.6 1311.0,147.4 1311.6,145.8 1312.3,139.4 1312.9,130.6 1313.5,128.2 1314.1,127.2 1314.7,134.8 1315.4,142.1 1316.0,151.9 1316.6,144.9 1317.2,139.5 1317.8,130.3 1318.5,125.9 1319.1,128.4 1319.7,135.9 1320.3,142.0 1320.9,149.3 1321.6,146.4 1322.2,138.6 1322.8,129.8 1323.4,128.1 1324.0,128.0 1324.7,134.5 1325.3,142.9 1325.9,146.3 1326.5,146.5 1327.1,137.6 1327.8,132.3 1328.4,129.0 1329.0,129.4 1329.6,137.7 1330.2,142.9 1330.9,142.7 1331.5,142.5 1332.1,139.1 1332.7,130.3 1333.3,128.9 1334.0,127.9 1334.6,135.8 1335.2,144.0 1335.8,150.8 1336.4,144.0 1337.1,137.0 1337.7,130.9 1338.3,128.0 1338.9,127.4 1339.5,134.7 1340.2,145.2 1340.8,151.6 1341.4,144.3 1342.0,140.2 1342.6,129.8 1343.3,125.2 1343.9,127.4 1344.5,134.3 1345.1,144.1 1345.7,148.6 1346.4,143.9 1347.0,137.7 1347.6,129.2 1348.2,128.5 1348.8,128.8 1349.5,135.2 1350.1,144.0 1350.7,147.4 1351.3,145.2 1351.9,138.1 1352.6,132.8 1353.2,129.3 1353.8,132.2 1354.4,136.4 1355.0,142.9 1355.7,145.9 1356.3,143.3 1356.9,137.7 1357.5,132.0 1358.1,130.5 1358.8,131.1 1359.4,138.0 1360.0,144.2 1360.6,145.0 1361.2,145.4 1361.9,137.3 1362.5,130.0 1363.1,129.3 1363.7,129.5 1364.3,135.6 1365.0,141.3 1365.6,143.9 1366.2,141.8 1366.8,139.1 1367.4,130.3 1368.1,130.8 1368.7,132.6 1369.3,136.5 1369.9,141.0 1370.5,145.5 1371.2,142.4 1371.8,136.9 1372.4,131.7 1373.0,129.8 1373.6,133.5 1374.3,135.9 1374.9,143.1 1375.5,147.8 1376.1,144.8 1376.7,138.6 1377.4,131.9 1378.0,129.3 1378.6,130.0 1379.2,136.3 1379.8,146.0 1380.5,147.9 1381.1,145.7 1381.7,137.0 1382.3,130.7 1382.9,131.6 1383.6,133.9 1384.2,139.6 1384.8,144.3 1385.4,145.7 1386.0,143.9 1386.7,136.3 1387.3,131.2 1387.9,128.8 1388.5,131.7 1389.1,139.3 1389.8,147.4 1390.4,147.8 1391.0,145.4 1391.6,139.5 1392.2,129.1 1392.9,128.4 1393.5,130.2 1394.1,139.7 1394.7,147.0 1395.3,149.2 1396.0,146.5 1396.6,139.5 1397.2,130.3 1397.8,129.2 1398.4,131.3 1399.1,140.3 1399.7,144.7 1400.3,149.6 1400.9,146.8 1401.5,140.0 1402.2,129.9 1402.8,128.5 1403.4,133.3 1404.0,139.7 1404.6,147.0 1405.3,149.5 1405.9,143.7 1406.5,140.5 1407.1,133.5 1407.7,129.1 1408.4,132.2 1409.0,138.5 1409.6,145.0 1410.2,151.3 1410.8,145.0 1411.5,137.6 1412.1,134.7 1412.7,129.1 1413.3,133.7 1413.9,141.8 1414.6,145.2 1415.2,150.1 1415.8,146.1 1416.4,139.2 1417.0,130.0 1417.7,129.3 1418.3,131.4 1418.9,139.0 1419.5,150.1 1420.1,158.4 1420.8,147.6 1421.4,137.2 1422.0,130.4 1422.6,126.1 1423.2,130.7 1423.9,138.7 1424.5,147.7 1425.1,158.0 1425.7,146.2 1426.3,138.5 1427.0,130.6 1427.6,128.5 1428.2,132.4 1428.8,139.3 1429.4,145.3 1430.1,149.5 1430.7,145.9 1431.3,138.4 1431.9,134.4 1432.5,129.8 1433.2,135.4 1433.8,139.4 1434.4,146.9 1435.0,149.1 1435.6,146.8 1436.3,137.0 1436.9,133.7 1437.5,129.9 1438.1,133.4 1438.7,140.6 1439.4,147.3 1440.0,153.1 1440.6,147.8 1441.2,138.8 1441.8,132.8 1442.5,130.0 1443.1,132.3 1443.7,139.6 1444.3,148.9 1444.9,148.6 1445.6,146.5 1446.2,136.8 1446.8,131.0 1447.4,129.1 1448.0,131.4 1448.7,141.4 1449.3,149.8 1449.9,152.8 1450.5,146.9 1451.1,139.3 1451.8,130.3 1452.4,127.8 1453.0,131.6 1453.6,142.3 1454.2,148.3 1454.9,152.5 1455.5,146.5 1456.1,137.2 1456.7,129.4 1457.3,128.0 1458.0,132.7 1458.6,142.7 1459.2,150.1 1459.8,150.2 1460.4,145.0 1461.1,136.3 1461.7,131.6 1462.3,129.2 1462.9,134.0 1463.5,143.0 1464.2,148.3 1464.8,153.4 1465.4,148.3 1466.0,138.6 1466.6,131.3 1467.3,127.8 1467.9,132.8 1468.5,140.6 1469.1,148.9 1469.7,155.8 1470.4,146.7 1471.0,138.5 1471.6,133.6 1472.2,131.1 1472.8,134.9 1473.5,141.1 1474.1,147.6 1474.7,148.6 1475.3,146.3 1475.9,138.0 1476.6,132.7 1477.2,130.4 1477.8,134.2 1478.4,143.1 1479.0,147.9 1479.7,145.9 1480.3,142.5 1480.9,139.7 1481.5,130.7 1482.1,132.2 1482.8,133.7 1483.4,139.8 1484.0,148.4 1484.6,149.2 1485.2,142.3 1485.9,135.4 1486.5,131.5 1487.1,131.4 1487.7,134.6 1488.3,140.2 1489.0,148.5 1489.6,148.4 1490.2,144.9 1490.8,137.9 1491.4,130.0 1492.1,129.1 1492.7,135.1 1493.3,140.4 1493.9,148.2 1494.5,147.0 1495.2,145.4 1495.8,138.1 1496.4,128.8 1497.0,129.1 1497.6,133.1 1498.3,139.8 1498.9,147.5 1499.5,150.0 1500.1,143.0 1500.7,135.8 1501.4,129.3 1502.0,127.4 1502.6,132.5 1503.2,142.4 1503.8,149.3 1504.5,152.5 1505.1,144.8 1505.7,135.6 1506.3,129.1 1506.9,130.9 1507.6,134.3 1508.2,142.1 1508.8,145.4 1509.4,155.3 1510.0,144.0 1510.7,136.6 1511.3,131.9 1511.9,129.9 1512.5,133.6 1513.1,139.6 1513.8,146.2 1514.4,146.0 1515.0,143.1 1515.6,135.0 1516.2,131.1 1516.9,129.1 1517.5,133.3 1518.1,141.2 1518.7,144.7 1519.3,146.7 1520.0,143.7 1520.6,137.0 1521.2,131.8 1521.8,130.9 1522.4,133.3 1523.1,140.7 1523.7,148.1 1524.3,145.8 1524.9,141.3 1525.5,134.2 1526.2,128.3 1526.8,130.2 1527.4,134.1 1528.0,140.8 1528.6,148.2 1529.3,146.0 1529.9,141.2 1530.5,134.7 1531.1,129.6 1531.7,128.7 1532.4,131.5 1533.0,142.2 1533.6,146.2 1534.2,145.4 1534.8,140.7 1535.5,132.5 1536.1,129.8 1536.7,129.5 1537.3,132.3 1537.9,140.0 1538.6,147.8 1539.2,146.1 1539.8,141.9 1540.4,133.2 1541.0,126.0 1541.7,126.2 1542.3,131.6 1542.9,141.1 1543.5,146.3 1544.1,152.2 1544.8,141.1 1545.4,134.4 1546.0,129.2 1546.6,126.3 1547.2,133.1 1547.9,140.3 1548.5,145.0 1549.1,145.2 1549.7,140.1 1550.3,134.6 1551.0,126.9 1551.6,127.2 1552.2,134.0 1552.8,142.0 1553.4,147.3 1554.1,145.3 1554.7,138.9 1555.3,133.0 1555.9,127.9 1556.5,127.9 1557.2,134.4 1557.8,141.4 1558.4,146.9 1559.0,147.3 1559.6,139.9 1560.3,133.2 1560.9,126.7 1561.5,126.1 1562.1,133.0 1562.7,143.3 1563.4,149.3 1564.0,146.1 1564.6,141.0 1565.2,133.6 1565.8,126.4 1566.5,125.5 1567.1,135.0 1567.7,140.3 1568.3,148.5 1568.9,147.6 1569.6,141.2 1570.2,130.6 1570.8,127.7 1571.4,127.1 1572.0,131.8 1572.7,141.3 1573.3,151.2 1573.9,149.0 1574.5,142.1 1575.1,133.6 1575.8,125.1 1576.4,128.3 1577.0,133.1 1577.6,143.6 1578.2,147.1 1578.9,146.3 1579.5,141.2 1580.1,132.6 1580.7,124.7 1581.3,128.4 1582.0,132.1 1582.6,143.6 1583.2,149.6 1583.8,148.0 1584.4,140.4 1585.1,130.8 1585.7,125.5 1586.3,127.1 1586.9,132.9 1587.5,143.0 1588.2,146.9 1588.8,146.1 1589.4,139.5 1590.0,132.7 1590.6,126.6 1591.3,128.6 1591.9,136.1 1592.5,139.9 1593.1,151.1 1593.7,143.6 1594.4,139.4 1595.0,132.0 1595.6,126.3 1596.2,128.2 1596.8,134.4 1597.5,141.6 1598.1,148.8 1598.7,147.3 1599.3,141.4 1599.9,131.1 1600.6,128.6 1601.2,127.7 1601.8,133.4 1602.4,140.9 1603.0,145.5 1603.7,144.4 1604.3,141.9 1604.9,132.5 1605.5,130.0 1606.1,131.1 1606.8,134.7 1607.4,144.5 1608.0,152.8 1608.6,145.9 1609.2,140.9 1609.9,132.9 1610.5,129.5 1611.1,128.6 1611.7,137.3 1612.3,141.5 1613.0,149.7 1613.6,145.9 1614.2,138.8 1614.8,134.4 1615.4,128.0 1616.1,127.6 1616.7,136.9 1617.3,144.9 1617.9,150.6 1618.5,146.7 1619.2,139.5 1619.8,133.1 1620.4,129.5 1621.0,133.3 1621.6,138.6 1622.3,143.9 1622.9,149.8 1623.5,145.2 1624.1,140.2 1624.7,132.8 1625.4,133.1 1626.0,131.0 1626.6,135.7 1627.2,142.1 1627.8,146.6 1628.5,144.5 1629.1,138.2 1629.7,133.1 1630.3,131.4 1630.9,135.0 1631.6,139.2 1632.2,141.8 1632.8,147.5 1633.4,145.8 1634.0,140.2 1634.7,133.6 1635.3,130.8 1635.9,133.1 1636.5,136.9 1637.1,143.6 1637.8,147.4 1638.4,146.1 1639.0,141.0 1639.6,132.7 1640.2,131.8 1640.9,132.6 1641.5,138.8 1642.1,144.0 1642.7,144.9 1643.3,145.3 1644.0,140.1 1644.6,136.1 1645.2,133.1 1645.8,132.5 1646.4,139.8 1647.1,145.0 1647.7,145.9 1648.3,146.2 1648.9,139.8 1649.5,132.2 1650.2,127.7 1650.8,131.8 1651.4,139.0 1652.0,144.5 1652.6,148.9 1653.3,148.1 1653.9,141.3 1654.5,133.0 1655.1,131.1 1655.7,131.5 1656.4,137.3 1657.0,142.7 1657.6,147.0 1658.2,146.8 1658.8,139.0 1659.5,133.6 1660.1,131.4 1660.7,132.6 1661.3,137.9 1661.9,143.8 1662.6,146.4 1663.2,144.3 1663.8,138.9 1664.4,137.1 1665.0,134.8 1665.7,135.4 1666.3,140.6 1666.9,147.3 1667.5,149.0 1668.1,147.3 1668.8,140.3 1669.4,131.5 1670.0,127.8 1670.6,130.0 1671.2,140.9 1671.9,145.5 1672.5,149.0 1673.1,146.5 1673.7,140.1 1674.3,130.9 1675.0,127.5 1675.6,129.9 1676.2,137.9 1676.8,145.9 1677.4,157.4 1678.1,149.4 1678.7,138.5 1679.3,131.7 1679.9,132.5 1680.5,134.6 1681.2,141.5 1681.8,144.3 1682.4,152.9 1683.0,144.2 1683.6,140.1 1684.3,133.2 1684.9,130.2 1685.5,134.8 1686.1,138.7 1686.7,147.3 1687.4,151.4 1688.0,147.4 1688.6,141.7 1689.2,132.7 1689.8,129.0 1690.5,130.4 1691.1,140.3 1691.7,150.4 1692.3,152.9 1692.9,147.5 1693.6,139.1 1694.2,130.3 1694.8,126.8 1695.4,133.4 1696.0,139.6 1696.7,147.2 1697.3,152.6 1697.9,146.6 1698.5,138.2 1699.1,131.8 1699.8,129.9 1700.4,132.6 1701.0,139.8 1701.6,147.4 1702.2,153.1 1702.9,147.2 1703.5,139.3 1704.1,132.2 1704.7,129.8 1705.3,130.5 1706.0,138.8 1706.6,149.0 1707.2,148.3 1707.8,148.4 1708.4,140.4 1709.1,132.7 1709.7,129.4 1710.3,134.2 1710.9,138.4 1711.5,146.0 1712.2,147.9 1712.8,145.1 1713.4,140.6 1714.0,134.7 1714.6,130.2 1715.3,135.3 1716.1,149.6 1717.3,166.2 1718.1,172.8 1718.8,177.4 1720.0,177.8 1721.1,178.9 1722.2,181.1 1723.3,179.7 1724.8,177.5 1726.4,178.2 1727.1,182.3 1727.9,184.2 1728.6,179.4 1729.4,175.2 1730.5,176.4 1731.6,178.2 1733.5,179.5 1735.4,179.7 1736.9,182.1 1738.4,184.2 1739.5,184.6 1740.6,185.7 1741.8,186.5 1742.9,191.7 1744.0,186.9 1745.2,185.7 1745.9,184.8 1746.7,182.0 1747.8,187.7 1748.9,193.2 1751.2,180.5 1752.3,185.4 1753.4,188.7 1754.9,194.1 1756.4,195.5 1757.2,192.2 1757.9,187.2 1758.7,184.5 1759.4,185.7 1760.9,184.1 1762.4,184.2 1763.9,182.7 1765.5,180.5 1767.0,180.0 1768.5,182.0 1770.0,184.0 1771.5,182.0 1773.0,185.0 1774.5,184.2 1776.0,186.5 1777.5,185.7 1779.0,184.1 1780.5,182.7 1782.0,183.5 1783.5,181.2 1785.4,177.3 1787.3,176.7 1787.8,172.1 1788.3,169.2 1788.9,163.7 1789.5,158.6 1791.0,142.1 1792.5,129.3 1793.4,132.6 1794.3,133.8 1795.7,132.6 1797.0,131.6 1798.2,134.5 1799.3,140.6 1800.4,145.2 1801.5,151.1 1803.8,166.2 1805.3,149.6 1805.7,144.3 1806.1,140.6 1806.8,137.8 1807.6,136.8 1808.7,138.8 1809.8,143.6 1810.9,141.0 1812.1,139.1 1812.8,137.4 1813.6,136.1 1814.7,139.9 1815.8,141.4 1816.6,144.5 1817.3,145.1 1818.5,146.3 1819.6,147.4 1820.3,148.3 1821.1,149.6 1821.5,155.7 1821.8,159.4" fill="none" stroke="#f0f0f0" stroke-width="1.35" stroke-linejoin="round"/><line x1="1399" x2="1399" y1="15.0" y2="238.2" stroke="#f0f030" stroke-width="1.2"/></svg>
<span style="left:921.10px;top:5.27px;font-size:20.00px;line-height:20.00px;color:#fff;">40.0</span>
<span style="left:921.10px;top:50.27px;font-size:20.00px;line-height:20.00px;color:#fff;">20.0</span>
<span style="left:932.20px;top:94.77px;font-size:20.00px;line-height:20.00px;color:#fff;">0.0</span>
<span style="left:914.40px;top:139.77px;font-size:20.00px;line-height:20.00px;color:#fff;">-20.0</span>
<span style="left:914.40px;top:184.77px;font-size:20.00px;line-height:20.00px;color:#fff;">-40.0</span>
<span style="left:914.40px;top:228.27px;font-size:20.00px;line-height:20.00px;color:#fff;">-60.0</span>
<span style="left:997.77px;top:245.39px;font-size:20.10px;line-height:20.10px;color:#fff;">216</span>
<span style="left:1072.38px;top:245.39px;font-size:20.10px;line-height:20.10px;color:#fff;">216.2</span>
<span style="left:1155.02px;top:245.39px;font-size:20.10px;line-height:20.10px;color:#fff;">216.4</span>
<span style="left:1238.07px;top:245.39px;font-size:20.10px;line-height:20.10px;color:#fff;">216.6</span>
<span style="left:1320.97px;top:245.39px;font-size:20.10px;line-height:20.10px;color:#fff;">216.8</span>
<span style="left:1412.37px;top:245.39px;font-size:20.10px;line-height:20.10px;color:#fff;">217</span>
<span style="left:1486.88px;top:245.39px;font-size:20.10px;line-height:20.10px;color:#fff;">217.2</span>
<span style="left:1569.52px;top:245.39px;font-size:20.10px;line-height:20.10px;color:#fff;">217.4</span>
<span style="left:1652.57px;top:245.39px;font-size:20.10px;line-height:20.10px;color:#fff;">217.6</span>
<span style="left:1735.47px;top:245.39px;font-size:20.10px;line-height:20.10px;color:#fff;">217.8</span>
<span style="left:1306.70px;top:274.61px;font-size:23.50px;line-height:23.50px;color:#fff;transform:scaleX(1.0116);transform-origin:0 0;">Frequency (MHz)</span>
<span style="left:858.24px;top:210.43px;font-size:25px;line-height:25px;color:#fff;transform-origin:0 0;transform:rotate(-90deg) scaleX(0.9661)">Magnitude (dB)</span>
<span style="left:9.10px;top:344.06px;font-size:22.97px;line-height:22.97px;color:#fff;font-style:italic;transform:scaleX(1.0096);transform-origin:0 0;">DAB+</span>
<div style="left:94.00px;top:335.30px;width:89.80px;height:32.40px;border:1.7px solid #868686;border-radius:4.5px;box-sizing:border-box;"></div>
<span style="left:97.33px;top:341.47px;font-size:20.35px;line-height:20.35px;color:#fff;transform:scaleX(0.9648);transform-origin:0 0;">11A</span>
<svg style="left:151.90px;top:346.80px" width="15.00" height="8.00"><polygon points="0,0 15.00,0 7.50,8.00" fill="#fff"/></svg>
<div style="left:199.00px;top:320.50px;width:1.20px;height:58.50px;background:#c8d8c8;"></div>
<div style="left:200.00px;top:320.50px;width:256.00px;height:58.50px;background:#1d6a19;"></div>
<span style="left:222.48px;top:340.57px;font-size:23.55px;line-height:23.55px;color:#68b868;transform:scaleX(0.9639);transform-origin:0 0;">EId: 9629</span>
<div style="left:300px;top:320px;width:156px;height:59px;overflow:hidden"><span style="left:48.41px;top:20.57px;font-size:23.55px;line-height:23.55px;color:#70cc18;transform:scaleX(0.9520);transform-origin:0 0">MUX3-SYDSJ-BORN</span></div>
<div style="left:456px;top:320px;width:164px;height:59px;overflow:hidden"><span style="left:-107.59px;top:20.57px;font-size:23.55px;line-height:23.55px;color:#f4f426;transform:scaleX(0.9520);transform-origin:0 0">MUX3-SYDSJ-BORN</span></div>
<span style="left:591.40px;top:340.57px;font-size:23.55px;line-height:23.55px;color:#fff;transform:scaleX(1.0218);transform-origin:0 0;">2023-09-16</span>
<span style="left:726.87px;top:340.57px;font-size:23.55px;line-height:23.55px;color:#fff;transform:scaleX(0.9875);transform-origin:0 0;">07:11:14</span>
<div style="left:820.00px;top:320.50px;width:4.20px;height:58.50px;background:#f2f2f2;"></div>
<div style="left:839.10px;top:335.30px;width:38.00px;height:32.60px;border:1.7px solid #868686;border-radius:4.5px;box-sizing:border-box;"></div>
<svg style="left:849.60px;top:346.80px" width="15.50" height="8.00"><polygon points="0,0 15.50,0 7.75,8.00" fill="#fff"/></svg>
<div style="left:912.00px;top:335.60px;width:34.60px;height:34.60px;border-radius:50%;background:#1e66a4;"></div>
<div style="left:922.15px;top:345.75px;width:14.30px;height:14.30px;border-radius:50%;background:#ff0000;"></div>
<div style="left:965.10px;top:335.60px;width:34.60px;height:34.60px;border-radius:50%;background:#1c4468;"></div>
<div style="left:975.30px;top:345.30px;width:13.60px;height:14.30px;background:#181818;"></div>
<span style="left:1041.57px;top:341.40px;font-size:23.98px;line-height:23.98px;color:#fff;transform:scaleX(0.9505);transform-origin:0 0;">SId: 9D10</span>
<span style="left:1187.51px;top:330.69px;font-size:36.63px;line-height:36.63px;color:#ffff20;transform:scaleX(0.9252);transform-origin:0 0;">Classic.fm</span>
<span style="left:1388.62px;top:341.40px;font-size:23.98px;line-height:23.98px;color:#fff;transform:scaleX(0.9802);transform-origin:0 0;">72 kbps</span>
<span style="left:1486.49px;top:341.40px;font-size:23.98px;line-height:23.98px;color:#fff;transform:scaleX(0.8898);transform-origin:0 0;">EEP 3-A</span>
<svg style="left:1610px;top:326px" width="40" height="52" viewBox="1610 326 40 52"><path d="M1618.5 343 H1626.3 V358.3 H1618.5 Z M1626.3 343 L1640.5 333.6 V369.8 L1626.3 358.3" fill="none" stroke="#ececec" stroke-width="2.4" stroke-linejoin="miter"/></svg>
<div style="left:1790.80px;top:333.30px;width:90.00px;height:32.90px;border:1.7px solid #868686;border-radius:4.5px;box-sizing:border-box;border-right:none;"></div>
<span style="left:1793.14px;top:339.77px;font-size:19.77px;line-height:19.77px;color:#fff;transform:scaleX(0.9224);transform-origin:0 0;">DAB</span>
<svg style="left:1848.00px;top:345.00px" width="15.20" height="8.30"><polygon points="0,0 15.20,0 7.60,8.30" fill="#fff"/></svg>
<div style="left:0.00px;top:380.00px;width:286.50px;height:511.00px;background:#1c5a8b;"></div>
<div style="left:0.00px;top:380.00px;width:286.50px;height:50.40px;background:#0f2d52;"></div>
<div style="left:286.30px;top:380.30px;width:7.80px;height:511.00px;background:linear-gradient(90deg,#e4e4e8,#fafafa 50%,#e8e8ec);"></div>
<div style="left:294.00px;top:380.00px;width:272.00px;height:511.00px;background:#1c5a8b;"></div>
<div style="left:294.00px;top:380.00px;width:272.00px;height:51.00px;background:#0f2d52;"></div>
<div style="left:564.60px;top:431.00px;width:1.20px;height:460.00px;background:#3a76a6;"></div>
<div style="left:566.00px;top:380.30px;width:4.20px;height:511.00px;background:#bcc4d4;"></div>
<div style="left:570.00px;top:380.00px;width:417.00px;height:511.00px;background:#1c5a8b;"></div>
<div style="left:570.00px;top:380.00px;width:417.00px;height:51.50px;background:#0f2d52;"></div>
<div style="left:582.00px;top:431.00px;width:405.00px;height:49.40px;background:#0f2d52;"></div>
<div style="left:979.30px;top:480.30px;width:1.10px;height:411.00px;background:#4a86b4;"></div>
<div style="left:986.80px;top:380.30px;width:7.70px;height:511.00px;background:linear-gradient(90deg,#e8e8ec,#fafafa 50%,#e4e8ee);"></div>
<div style="left:994.50px;top:380.30px;width:871.00px;height:30.00px;background:#10305a;"></div>
<div style="left:994.50px;top:887.60px;width:871.00px;height:4.00px;background:#828282;"></div>
<div style="left:1242.20px;top:410.50px;width:1.10px;height:477.00px;background:#2a2a2a;"></div>
<span style="left:1.49px;top:390.31px;font-size:30.23px;line-height:30.23px;color:#ffff30;transform:scaleX(0.9298);transform-origin:0 0;">Classic.fm</span>
<div style="left:-2px;top:470.8px;width:195px;height:38.2px;background:#1f6aa1;border:2px solid #3a9ada;box-sizing:border-box"></div>
<div style="left:-3px;top:474px;width:193.2px;height:32px;border:2px dotted #06122a;box-sizing:border-box"></div>
<span style="left:2.49px;top:443.06px;font-size:22.97px;line-height:22.97px;color:#fff;transform:scaleX(0.9636);transform-origin:0 0;">Classic Rock</span>
<span style="left:2.47px;top:480.96px;font-size:22.97px;line-height:22.97px;color:#fff;transform:scaleX(0.9860);transform-origin:0 0;">Classic.fm</span>
<span style="left:1.68px;top:518.86px;font-size:22.97px;line-height:22.97px;color:#fff;transform:scaleX(1.0444);transform-origin:0 0;">Dansktopkanalen</span>
<span style="left:2.01px;top:556.76px;font-size:22.97px;line-height:22.97px;color:#fff;transform:scaleX(1.0631);transform-origin:0 0;">mix 7.</span>
<span style="left:2.14px;top:594.66px;font-size:22.97px;line-height:22.97px;color:#fff;transform:scaleX(0.9761);transform-origin:0 0;">myROCK.</span>
<span style="left:1.68px;top:632.56px;font-size:22.97px;line-height:22.97px;color:#fff;transform:scaleX(1.0454);transform-origin:0 0;">NOVA.</span>
<span style="left:1.86px;top:670.46px;font-size:22.97px;line-height:22.97px;color:#fff;transform:scaleX(0.9458);transform-origin:0 0;">PLANET ROCK.</span>
<span style="left:1.73px;top:708.36px;font-size:22.97px;line-height:22.97px;color:#fff;transform:scaleX(1.0205);transform-origin:0 0;">Pop FM.</span>
<span style="left:1.69px;top:746.26px;font-size:22.97px;line-height:22.97px;color:#fff;transform:scaleX(1.0390);transform-origin:0 0;">PopFM 80'er.</span>
<span style="left:1.72px;top:784.16px;font-size:22.97px;line-height:22.97px;color:#fff;transform:scaleX(1.0257);transform-origin:0 0;">Radio 100.</span>
<span style="left:1.70px;top:822.06px;font-size:22.97px;line-height:22.97px;color:#fff;transform:scaleX(1.0349);transform-origin:0 0;">Radio Soft.</span>
<span style="left:1.69px;top:859.96px;font-size:22.97px;line-height:22.97px;color:#fff;transform:scaleX(1.0375);transform-origin:0 0;">Radio Vinyl.</span>
<span style="left:301.49px;top:390.97px;font-size:29.51px;line-height:29.51px;color:#fff;transform:scaleX(0.9843);transform-origin:0 0;">Service Quality</span>
<div style="left:489.20px;top:446.90px;width:60.20px;height:37.50px;background:#828282;"></div>
<div style="left:489.20px;top:446.90px;width:25.00px;height:37.50px;background:#008000;"></div>
<span style="left:308.62px;top:457.91px;font-size:20.78px;line-height:20.78px;color:#fff;transform:scaleX(0.9392);transform-origin:0 0;">SNR (dB)</span>
<span style="left:502.72px;top:458.92px;font-size:18.17px;line-height:18.17px;color:#fff;transform:scaleX(0.9367);transform-origin:0 0;">14,4</span>
<div style="left:489.20px;top:493.10px;width:60.20px;height:37.50px;background:#828282;"></div>
<div style="left:489.20px;top:493.10px;width:60.20px;height:37.50px;background:#008000;"></div>
<span style="left:307.91px;top:504.11px;font-size:20.78px;line-height:20.78px;color:#fff;transform:scaleX(0.9570);transform-origin:0 0;">FIC (ok %)</span>
<span style="left:504.69px;top:505.12px;font-size:18.17px;line-height:18.17px;color:#fff;transform:scaleX(0.9592);transform-origin:0 0;">100</span>
<div style="left:489.20px;top:539.30px;width:60.20px;height:37.50px;background:#828282;"></div>
<div style="left:489.20px;top:539.30px;width:60.20px;height:37.50px;background:#008000;"></div>
<span style="left:307.93px;top:550.31px;font-size:20.78px;line-height:20.78px;color:#fff;transform:scaleX(0.9470);transform-origin:0 0;">RS (ok %)</span>
<span style="left:504.69px;top:551.32px;font-size:18.17px;line-height:18.17px;color:#fff;transform:scaleX(0.9592);transform-origin:0 0;">100</span>
<div style="left:489.20px;top:585.50px;width:60.20px;height:37.50px;background:#828282;"></div>
<div style="left:489.20px;top:585.50px;width:60.20px;height:37.50px;background:#008000;"></div>
<span style="left:307.78px;top:596.51px;font-size:20.78px;line-height:20.78px;color:#fff;transform:scaleX(1.0355);transform-origin:0 0;">Null Symbol</span>
<div style="left:489.20px;top:631.70px;width:60.20px;height:37.50px;background:#828282;"></div>
<div style="left:489.20px;top:631.70px;width:18.00px;height:37.50px;background:#008000;"></div>
<span style="left:308.57px;top:642.71px;font-size:20.78px;line-height:20.78px;color:#fff;transform:scaleX(0.9923);transform-origin:0 0;">SymbolTime (ms)</span>
<span style="left:503.33px;top:643.72px;font-size:18.17px;line-height:18.17px;color:#fff;transform:scaleX(0.9193);transform-origin:0 0;">0,44</span>
<div style="left:489.20px;top:677.90px;width:60.20px;height:37.50px;background:#828282;"></div>
<div style="left:489.20px;top:677.90px;width:38.00px;height:37.50px;background:#008000;"></div>
<span style="left:307.87px;top:688.91px;font-size:20.78px;line-height:20.78px;color:#fff;transform:scaleX(0.9823);transform-origin:0 0;">FrameTime (ms)</span>
<span style="left:503.24px;top:689.92px;font-size:18.17px;line-height:18.17px;color:#fff;transform:scaleX(0.9317);transform-origin:0 0;">95,9</span>
<div style="left:582.00px;top:391.20px;width:187.00px;height:40.40px;background:#858585;border:1px solid #9c9c9c;border-bottom:none;border-radius:4px 13px 0 0;box-sizing:border-box;"></div>
<div style="left:769.80px;top:391.20px;width:230.00px;height:40.40px;background:#858585;border:1px solid #9c9c9c;border-bottom:none;border-radius:4px 13px 0 0;box-sizing:border-box;clip-path:inset(0 12.8px 0 0);"></div>
<div style="left:582.00px;top:440.30px;width:141.20px;height:40.20px;background:#858585;border:1px solid #9c9c9c;border-bottom:none;border-radius:4px 13px 0 0;box-sizing:border-box;"></div>
<div style="left:724.40px;top:440.30px;width:116.00px;height:41.00px;background:#1c5a8b;border:1px solid #3c7eb2;border-bottom:none;border-radius:4px 13px 0 0;box-sizing:border-box;"></div>
<div style="left:841.00px;top:440.30px;width:160.00px;height:40.20px;background:#858585;border:1px solid #9c9c9c;border-bottom:none;border-radius:4px 13px 0 0;box-sizing:border-box;clip-path:inset(0 14px 0 0);"></div>
<div style="left:580.00px;top:440.30px;width:2.00px;height:40.20px;background:#0b2038;"></div>
<span style="left:652.00px;top:402.41px;font-size:25.15px;line-height:25.15px;color:#dcdcdc;transform:scaleX(0.9332);transform-origin:0 0;">AAC</span>
<span style="left:839.12px;top:402.05px;font-size:25.58px;line-height:25.58px;color:#dcdcdc;transform:scaleX(1.0269);transform-origin:0 0;">Options</span>
<span style="left:626.94px;top:451.44px;font-size:25.00px;line-height:25.00px;color:#dcdcdc;transform:scaleX(0.9411);transform-origin:0 0;">Sync</span>
<span style="left:769.52px;top:451.44px;font-size:25.00px;line-height:25.00px;color:#fff;transform:scaleX(0.9555);transform-origin:0 0;">TII</span>
<span style="left:887.40px;top:451.44px;font-size:25.00px;line-height:25.00px;color:#dcdcdc;transform:scaleX(1.0481);transform-origin:0 0;">Audio</span>
<div style="left:622.40px;top:496.10px;width:13.40px;height:13.40px;border-radius:50%;background:#ff0000;"></div>
<div style="left:666.20px;top:496.20px;width:12.90px;height:13.30px;background:#0f2a4a;"></div>
<div style="left:593.00px;top:524.80px;width:371.00px;height:1.20px;background:#9fb8cf;"></div>
<span style="left:591.69px;top:554.93px;font-size:22.53px;line-height:22.53px;color:#fff;">Pattern</span>
<span style="left:692.61px;top:554.93px;font-size:22.53px;line-height:22.53px;color:#fff;transform:scaleX(1.0507);transform-origin:0 0;">MainId</span>
<span style="left:792.10px;top:554.93px;font-size:22.53px;line-height:22.53px;color:#fff;transform:scaleX(0.9905);transform-origin:0 0;">SubId</span>
<span style="left:879.38px;top:554.93px;font-size:22.53px;line-height:22.53px;color:#fff;transform:scaleX(1.0099);transform-origin:0 0;">Strength</span>
<div style="left:593.00px;top:579.00px;width:371.00px;height:1.30px;background:#a8bfd4;"></div>
<span style="left:595.08px;top:600.98px;font-size:20.93px;line-height:20.93px;color:#fff;transform:scaleX(0.9763);transform-origin:0 0;">0x17</span>
<span style="left:696.43px;top:600.98px;font-size:20.93px;line-height:20.93px;color:#fff;">1</span>
<span style="left:795.53px;top:600.98px;font-size:20.93px;line-height:20.93px;color:#fff;">1</span>
<span style="left:882.21px;top:600.98px;font-size:20.93px;line-height:20.93px;color:#fff;transform:scaleX(0.9479);transform-origin:0 0;">0.95</span>
<span style="left:595.08px;top:637.68px;font-size:20.93px;line-height:20.93px;color:#fff;transform:scaleX(0.9763);transform-origin:0 0;">0x17</span>
<span style="left:696.43px;top:637.68px;font-size:20.93px;line-height:20.93px;color:#fff;">1</span>
<span style="left:794.66px;top:637.68px;font-size:20.93px;line-height:20.93px;color:#fff;transform:scaleX(1.0921);transform-origin:0 0;">2</span>
<span style="left:882.21px;top:637.68px;font-size:20.93px;line-height:20.93px;color:#fff;transform:scaleX(0.9479);transform-origin:0 0;">0.95</span>
<span style="left:1281.93px;top:383.38px;font-size:22.24px;line-height:22.24px;color:#fff;transform:scaleX(0.9612);transform-origin:0 0;">Channel Impulse Response (CIR)</span>
<svg style="left:1834px;top:385px" width="24" height="21" viewBox="1834 385 24 21"><polygon points="1837,387.6 1854.2,387.6 1845.6,402.6" fill="none" stroke="#c8d8e8" stroke-width="1.1"/></svg>
<div style="left:1864.00px;top:387.60px;width:1.00px;height:1.60px;background:#b07848;"></div>
<div style="left:1864.00px;top:401.00px;width:1.00px;height:1.60px;background:#b07848;"></div>
<div style="left:1010.10px;top:427.90px;width:19.20px;height:19.20px;border-radius:50%;background:#e2e2e2;"></div>
<span style="left:1034.66px;top:430.07px;font-size:18.46px;line-height:18.46px;color:#fff;transform:scaleX(0.9059);transform-origin:0 0;">Freeze</span>
<div style="left:1116.40px;top:427.90px;width:19.20px;height:19.20px;border-radius:50%;background:#e2e2e2;"></div>
<span style="left:1141.40px;top:430.07px;font-size:18.46px;line-height:18.46px;color:#fff;transform:scaleX(0.9731);transform-origin:0 0;">Gradient</span>
<span style="left:1016.29px;top:491.70px;font-size:18.31px;line-height:18.31px;color:#fff;transform:scaleX(0.9856);transform-origin:0 0;">Smoothing Level</span>
<div style="left:1010.00px;top:533.50px;width:216.20px;height:3px;border-radius:2px;background:#e6e6e6"></div>
<div style="left:1019.05px;top:518.10px;width:1.3px;height:5.8px;background:#c8c8c8"></div>
<div style="left:1038.74px;top:519.90px;width:1.3px;height:4.0px;background:#b0b0b0"></div>
<div style="left:1058.43px;top:519.90px;width:1.3px;height:4.0px;background:#b0b0b0"></div>
<div style="left:1078.12px;top:519.90px;width:1.3px;height:4.0px;background:#b0b0b0"></div>
<div style="left:1097.81px;top:519.90px;width:1.3px;height:4.0px;background:#b0b0b0"></div>
<div style="left:1117.50px;top:519.90px;width:1.3px;height:4.0px;background:#b0b0b0"></div>
<div style="left:1137.19px;top:519.90px;width:1.3px;height:4.0px;background:#b0b0b0"></div>
<div style="left:1156.88px;top:519.90px;width:1.3px;height:4.0px;background:#b0b0b0"></div>
<div style="left:1176.57px;top:519.90px;width:1.3px;height:4.0px;background:#b0b0b0"></div>
<div style="left:1196.26px;top:519.90px;width:1.3px;height:4.0px;background:#b0b0b0"></div>
<div style="left:1215.95px;top:518.10px;width:1.3px;height:5.8px;background:#c8c8c8"></div>
<div style="left:1029.60px;top:525.00px;width:20px;height:20px;border-radius:50%;background:linear-gradient(180deg,#d0d0d0 0%,#a8a8a8 40%,#5a5a5a 100%);box-shadow:0 0 0 0.6px rgba(0,0,0,.35)"></div>
<span style="left:1016.46px;top:572.44px;font-size:18.02px;line-height:18.02px;color:#fff;">Zoom X</span>
<div style="left:1010.00px;top:608.00px;width:216.20px;height:3px;border-radius:2px;background:#e6e6e6"></div>
<div style="left:1010.50px;top:599.50px;width:20px;height:20px;border-radius:50%;background:linear-gradient(180deg,#d0d0d0 0%,#a8a8a8 40%,#5a5a5a 100%);box-shadow:0 0 0 0.6px rgba(0,0,0,.35)"></div>
<span style="left:1016.46px;top:647.44px;font-size:18.02px;line-height:18.02px;color:#fff;transform:scaleX(0.9916);transform-origin:0 0;">Zoom Y</span>
<div style="left:1010.00px;top:683.20px;width:216.20px;height:3px;border-radius:2px;background:#e6e6e6"></div>
<div style="left:1010.50px;top:674.70px;width:20px;height:20px;border-radius:50%;background:linear-gradient(180deg,#d0d0d0 0%,#a8a8a8 40%,#5a5a5a 100%);box-shadow:0 0 0 0.6px rgba(0,0,0,.35)"></div>
<span style="left:1016.82px;top:722.04px;font-size:18.02px;line-height:18.02px;color:#fff;transform:scaleX(0.9749);transform-origin:0 0;">x-Axis</span>
<div style="left:1027.00px;top:752.00px;width:16.60px;height:16.60px;border-radius:50%;background:#fff;border:2px solid #a8a8a8;box-sizing:border-box;"></div>
<span style="left:1053.24px;top:751.94px;font-size:18.02px;line-height:18.02px;color:#fff;transform:scaleX(0.9393);transform-origin:0 0;">Samples</span>
<div style="left:1027.00px;top:781.30px;width:16.60px;height:16.60px;border-radius:50%;background:#fff;border:2px solid #a8a8a8;box-sizing:border-box;"></div>
<div style="left:1031.20px;top:785.50px;width:8.20px;height:8.20px;border-radius:50%;background:#222;"></div>
<span style="left:1052.59px;top:782.14px;font-size:18.02px;line-height:18.02px;color:#fff;transform:scaleX(0.9772);transform-origin:0 0;">Distance</span>
<div style="left:1027.00px;top:811.50px;width:16.60px;height:16.60px;border-radius:50%;background:#fff;border:2px solid #a8a8a8;box-sizing:border-box;"></div>
<span style="left:1053.65px;top:811.84px;font-size:18.02px;line-height:18.02px;color:#fff;transform:scaleX(0.9713);transform-origin:0 0;">Time</span>
<svg style="left:0;top:400px" width="1865" height="491" viewBox="0 400 1865 491"><rect x="1405" y="439.0" width="43" height="354.5" fill="#404040"/><line x1="1366.0" x2="1840.5" y1="510.2" y2="510.2" stroke="#767676" stroke-width="1.0"/><line x1="1366.0" x2="1840.5" y1="581.4" y2="581.4" stroke="#767676" stroke-width="1.0"/><line x1="1366.0" x2="1840.5" y1="652.3" y2="652.3" stroke="#767676" stroke-width="1.0"/><line x1="1366.0" x2="1840.5" y1="723.5" y2="723.5" stroke="#767676" stroke-width="1.0"/><line x1="1387.6" x2="1387.6" y1="439.0" y2="793.5" stroke="#767676" stroke-width="1.0"/><line x1="1419.4" x2="1419.4" y1="439.0" y2="793.5" stroke="#767676" stroke-width="1.0"/><line x1="1451.2" x2="1451.2" y1="439.0" y2="793.5" stroke="#767676" stroke-width="1.0"/><line x1="1483.0" x2="1483.0" y1="439.0" y2="793.5" stroke="#767676" stroke-width="1.0"/><line x1="1514.8" x2="1514.8" y1="439.0" y2="793.5" stroke="#767676" stroke-width="1.0"/><line x1="1546.6" x2="1546.6" y1="439.0" y2="793.5" stroke="#767676" stroke-width="1.0"/><line x1="1578.4" x2="1578.4" y1="439.0" y2="793.5" stroke="#767676" stroke-width="1.0"/><line x1="1610.2" x2="1610.2" y1="439.0" y2="793.5" stroke="#767676" stroke-width="1.0"/><line x1="1642.0" x2="1642.0" y1="439.0" y2="793.5" stroke="#767676" stroke-width="1.0"/><line x1="1673.8" x2="1673.8" y1="439.0" y2="793.5" stroke="#767676" stroke-width="1.0"/><line x1="1705.6" x2="1705.6" y1="439.0" y2="793.5" stroke="#767676" stroke-width="1.0"/><line x1="1737.4" x2="1737.4" y1="439.0" y2="793.5" stroke="#767676" stroke-width="1.0"/><line x1="1769.2" x2="1769.2" y1="439.0" y2="793.5" stroke="#767676" stroke-width="1.0"/><line x1="1801.0" x2="1801.0" y1="439.0" y2="793.5" stroke="#767676" stroke-width="1.0"/><line x1="1832.8" x2="1832.8" y1="439.0" y2="793.5" stroke="#767676" stroke-width="1.0"/><rect x="1366.0" y="439.0" width="474.5" height="354.5" fill="none" stroke="#8c8c8c" stroke-width="1.3"/><polyline points="1366.6,748.1 1367.2,780.8 1367.8,720.2 1368.3,703.3 1368.9,718.9 1369.5,720.0 1370.1,783.1 1370.6,722.6 1371.2,680.2 1371.8,691.6 1372.4,702.1 1373.0,761.0 1373.5,680.0 1374.1,683.3 1374.7,742.4 1375.3,706.9 1375.8,773.1 1376.4,763.7 1377.0,739.2 1377.6,758.8 1378.2,704.6 1378.7,703.7 1379.3,741.1 1379.9,737.8 1380.5,756.6 1381.0,759.3 1381.6,709.8 1382.2,720.2 1382.8,776.3 1383.4,733.3 1383.9,732.9 1384.5,701.5 1385.1,713.7 1385.7,714.0 1386.2,724.4 1386.8,686.1 1387.4,673.6 1388.0,733.3 1388.6,747.9 1389.1,703.7 1389.7,771.2 1390.3,737.2 1390.9,772.8 1391.4,737.9 1392.0,773.2 1392.6,736.4 1393.2,704.7 1393.8,691.2 1394.3,701.7 1394.9,720.6 1395.5,712.0 1396.1,735.6 1396.7,752.8 1397.2,728.5 1397.8,708.5 1398.4,777.9 1399.0,778.8 1399.5,704.0 1400.1,732.5 1400.7,705.2 1401.3,704.0 1401.9,682.1 1402.4,728.7 1403.0,722.7 1403.6,699.3 1404.2,705.6 1404.7,716.3 1405.3,702.4 1405.9,715.0 1406.5,683.9 1407.1,729.8 1407.6,707.1 1408.2,688.1 1408.8,744.4 1409.4,721.2 1409.9,737.6 1410.5,730.7 1411.1,775.2 1411.7,769.5 1412.3,700.5 1412.8,725.4 1413.4,713.7 1414.0,703.5 1414.6,729.6 1415.1,725.8 1415.7,757.7 1416.3,702.3 1416.9,696.2 1417.5,705.8 1418.0,693.5 1418.6,713.7 1419.2,710.6 1419.8,745.3 1420.3,703.0 1420.9,736.2 1421.5,726.5 1422.1,734.4 1422.7,712.4 1423.2,702.5 1423.8,705.3 1424.4,727.9 1425.0,744.9 1425.5,688.4 1426.1,732.3 1426.7,719.3 1427.3,754.5 1427.9,733.9 1428.4,768.9 1429.0,738.3 1429.6,703.1 1430.2,678.4 1430.7,714.8 1431.3,748.0 1431.9,714.2 1432.5,715.4 1433.1,698.7 1433.6,722.5 1434.2,688.7 1434.8,732.6 1435.4,739.8 1435.9,729.4 1436.5,694.6 1437.1,711.7 1437.7,733.2 1438.3,729.9 1438.8,710.9 1439.4,729.2 1440.0,722.8 1440.6,688.0 1441.1,695.9 1441.7,705.2 1442.3,747.2 1442.9,726.3 1443.5,728.0 1444.0,692.7 1444.6,728.8 1445.2,691.2 1445.8,742.6 1446.4,731.8 1446.9,681.1 1447.5,697.7 1448.0,628.0 1448.7,710.8 1449.2,750.3 1449.8,711.6 1450.4,730.3 1451.0,724.9 1451.6,757.6 1452.1,763.3 1452.7,690.8 1453.3,684.2 1453.9,678.5 1454.4,735.9 1455.0,767.3 1455.6,721.2 1456.2,707.5 1456.8,717.4 1457.3,767.6 1457.9,752.5 1458.5,713.5 1459.1,718.6 1459.6,704.0 1460.2,676.9 1460.8,741.4 1461.4,763.8 1462.0,676.1 1462.5,692.4 1463.1,729.2 1463.7,722.1 1464.3,688.3 1464.8,713.9 1465.4,761.9 1466.0,713.4 1466.6,717.3 1467.2,706.9 1467.7,679.2 1468.3,730.6 1468.9,736.6 1469.5,754.5 1470.0,692.4 1470.6,753.0 1471.2,679.4 1471.8,703.2 1472.4,685.4 1472.9,696.5 1473.5,680.9 1474.1,707.8 1474.7,671.6 1475.2,706.5 1475.8,690.7 1476.4,705.6 1477.0,689.8 1477.6,682.7 1478.1,679.4 1478.7,673.1 1479.3,665.6 1479.9,658.9 1480.4,660.5 1481.0,675.4 1481.6,648.7 1482.2,617.1 1483.0,539.9 1483.3,579.4 1483.9,641.2 1484.5,647.2 1485.1,671.1 1485.6,671.7 1486.2,686.0 1486.8,672.2 1487.4,695.3 1488.0,705.6 1488.5,692.0 1489.1,684.4 1489.7,707.2 1490.3,694.6 1491.0,634.5 1491.4,691.8 1492.0,735.3 1492.6,701.8 1493.2,703.5 1493.7,685.5 1494.3,729.3 1494.9,714.2 1495.5,711.6 1496.0,717.3 1496.6,731.1 1497.2,731.7 1497.8,715.0 1498.4,706.7 1498.9,712.0 1499.5,723.4 1500.1,722.8 1500.7,715.2 1501.3,765.7 1501.8,726.8 1502.4,686.9 1503.0,700.1 1503.6,689.8 1504.1,702.1 1504.7,707.2 1505.3,687.4 1505.9,737.4 1506.5,709.5 1507.0,711.3 1507.6,720.1 1508.2,733.3 1508.8,735.5 1509.3,695.4 1509.9,728.4 1510.5,731.4 1511.1,728.5 1511.7,717.7 1512.2,696.9 1512.8,700.9 1513.4,716.6 1514.0,699.6 1514.5,700.9 1515.1,693.3 1515.7,707.3 1516.3,688.6 1516.9,691.3 1517.4,706.0 1518.0,665.8 1518.6,700.6 1519.2,668.5 1519.7,690.9 1520.3,680.0 1520.9,661.6 1521.5,623.7 1522.1,595.1 1522.6,536.9 1523.2,599.7 1523.8,611.9 1524.4,655.7 1524.9,680.7 1525.5,662.0 1526.1,663.0 1526.7,700.7 1527.3,706.6 1527.8,667.8 1528.4,690.3 1529.0,693.5 1529.6,719.0 1530.1,716.1 1530.7,722.9 1531.3,701.5 1531.9,712.0 1532.5,679.5 1533.0,755.7 1533.6,730.2 1534.2,711.3 1534.8,710.5 1535.3,738.5 1535.9,696.2 1536.5,751.4 1537.1,702.0 1537.7,733.9 1538.2,740.7 1538.8,719.1 1539.4,760.4 1540.0,714.2 1540.5,763.2 1541.1,761.0 1541.7,717.1 1542.3,714.3 1542.9,734.4 1543.4,738.1 1544.0,715.1 1544.6,768.9 1545.2,740.2 1545.7,698.3 1546.3,692.3 1546.9,774.8 1547.5,777.9 1548.1,707.4 1548.6,731.2 1549.2,708.2 1549.8,719.4 1550.4,729.4 1551.0,714.8 1551.5,720.5 1552.1,754.5 1552.7,733.2 1553.3,699.6 1553.8,700.4 1554.4,716.5 1555.0,721.5 1555.6,704.2 1556.2,746.8 1556.7,720.0 1557.3,717.0 1557.9,701.9 1558.5,743.7 1559.0,743.3 1559.6,740.9 1560.2,723.0 1560.8,763.8 1561.4,717.2 1561.9,692.7 1562.5,736.1 1563.1,681.3 1563.7,732.8 1564.2,720.8 1564.8,675.3 1565.4,712.0 1566.0,726.4 1566.6,711.2 1567.1,718.5 1567.7,714.7 1568.3,755.4 1568.9,770.3 1569.4,712.0 1570.0,723.7 1570.6,720.5 1571.2,746.6 1571.8,684.4 1572.3,757.4 1572.9,676.0 1573.5,729.6 1574.1,735.8 1574.6,680.7 1575.2,677.1 1575.8,705.1 1576.4,682.8 1577.0,743.6 1577.5,698.9 1578.1,718.1 1578.7,743.8 1579.3,717.0 1579.8,749.9 1580.4,701.7 1581.0,712.1 1581.6,752.1 1582.2,741.4 1582.7,733.0 1583.3,722.3 1583.9,739.7 1584.5,735.5 1585.0,711.9 1585.6,757.1 1586.2,696.3 1586.8,721.4 1587.4,719.6 1587.9,706.1 1588.5,747.9 1589.1,679.9 1589.7,759.1 1590.2,710.5 1590.8,670.9 1591.4,748.4 1592.0,699.9 1592.6,666.1 1593.1,653.7 1593.7,723.7 1594.3,699.0 1594.9,667.1 1595.4,698.9 1596.0,678.2 1596.6,695.2 1597.2,777.7 1597.8,727.6 1598.3,684.4 1598.9,722.2 1599.5,729.8 1600.1,739.1 1600.6,748.1 1601.2,715.3 1601.8,726.3 1602.4,699.4 1603.0,786.9 1603.5,702.5 1604.1,782.7 1604.7,711.0 1605.3,741.9 1605.9,714.5 1606.4,744.1 1607.0,766.8 1607.6,703.5 1608.2,730.6 1608.7,759.0 1609.3,736.1 1609.9,765.9 1610.5,745.1 1611.1,736.7 1611.6,737.1 1612.2,784.0 1612.8,775.6 1613.4,741.6 1613.9,740.2 1614.5,712.9 1615.1,734.8 1615.7,710.4 1616.3,737.1 1616.8,760.4 1617.4,749.3 1618.0,753.6 1618.6,743.7 1619.1,720.9 1619.7,703.9 1620.3,747.6 1620.9,713.9 1621.5,704.6 1622.0,710.9 1622.6,681.7 1623.2,721.5 1623.8,725.1 1624.3,723.8 1624.9,789.4 1625.5,777.0 1626.1,730.8 1626.7,737.7 1627.2,757.1 1627.8,736.8 1628.4,715.1 1629.0,724.9 1629.5,735.2 1630.1,704.4 1630.7,767.1 1631.3,690.4 1631.9,712.7 1632.4,724.9 1633.0,712.0 1633.6,687.5 1634.2,719.5 1634.7,712.8 1635.3,715.5 1635.9,695.1 1636.5,697.7 1637.1,746.5 1637.6,779.6 1638.2,749.2 1638.8,741.3 1639.4,744.5 1639.9,732.8 1640.5,689.5 1641.1,751.5 1641.7,736.0 1642.3,698.6 1642.8,765.3 1643.4,739.2 1644.0,725.4 1644.6,707.4 1645.1,699.8 1645.7,751.2 1646.3,686.9 1646.9,733.3 1647.5,769.5 1648.0,762.9 1648.6,737.8 1649.2,706.4 1649.8,771.8 1650.3,750.1 1650.9,706.3 1651.5,703.7 1652.1,759.9 1652.7,786.2 1653.2,720.0 1653.8,706.3 1654.4,760.8 1655.0,731.0 1655.5,767.5 1656.1,726.3 1656.7,775.1 1657.3,774.8 1657.9,737.1 1658.4,701.5 1659.0,760.8 1659.6,770.4 1660.2,760.5 1660.8,707.0 1661.3,752.5 1661.9,754.9 1662.5,736.7 1663.1,705.1 1663.6,747.7 1664.2,727.9 1664.8,737.7 1665.4,725.0 1666.0,738.0 1666.5,709.7 1667.1,758.9 1667.7,727.7 1668.3,768.9 1668.8,703.1 1669.4,732.4 1670.0,662.9 1670.6,717.0 1671.2,751.0 1671.7,693.0 1672.3,748.7 1672.9,717.4 1673.5,711.4 1674.0,769.1 1674.6,764.3 1675.2,731.1 1675.8,740.1 1676.4,746.7 1676.9,756.2 1677.5,748.2 1678.1,689.1 1678.7,738.0 1679.2,734.9 1679.8,754.6 1680.4,762.9 1681.0,758.2 1681.6,699.6 1682.1,701.0 1682.7,752.7 1683.3,736.8 1683.9,725.9 1684.4,729.4 1685.0,762.0 1685.6,782.6 1686.2,709.3 1686.8,746.0 1687.3,738.9 1687.9,710.6 1688.5,711.4 1689.1,731.7 1689.6,699.4 1690.2,665.6 1690.8,722.6 1691.4,691.1 1692.0,722.2 1692.5,731.4 1693.1,663.8 1693.7,700.3 1694.3,760.3 1694.8,714.5 1695.4,730.1 1696.0,721.9 1696.6,702.3 1697.2,739.1 1697.7,716.8 1698.3,749.4 1698.9,727.1 1699.5,693.8 1700.0,710.7 1700.6,741.7 1701.2,742.6 1701.8,719.2 1702.4,732.1 1702.9,676.2 1703.5,739.9 1704.1,691.5 1704.7,752.4 1705.2,708.7 1705.8,703.1 1706.4,761.4 1707.0,738.7 1707.6,717.2 1708.1,737.9 1708.7,765.9 1709.3,711.1 1709.9,734.1 1710.5,765.8 1711.0,784.3 1711.6,732.1 1712.2,742.8 1712.8,707.0 1713.3,745.2 1713.9,786.7 1714.5,699.4 1715.1,741.9 1715.7,705.0 1716.2,724.6 1716.8,703.7 1717.4,696.1 1718.0,775.2 1718.5,754.6 1719.1,764.2 1719.7,688.9 1720.3,717.4 1720.9,693.7 1721.4,676.6 1722.0,706.1 1722.6,699.3 1723.2,689.3 1723.7,719.5 1724.3,704.4 1724.9,681.3 1725.5,735.2 1726.1,751.4 1726.6,720.4 1727.2,757.1 1727.8,745.4 1728.4,740.1 1728.9,709.7 1729.5,768.0 1730.1,737.3 1730.7,742.0 1731.3,720.1 1731.8,702.2 1732.4,734.4 1733.0,704.6 1733.6,735.0 1734.1,725.4 1734.7,744.4 1735.3,755.7 1735.9,695.0 1736.5,718.6 1737.0,749.7 1737.6,723.8 1738.2,736.0 1738.8,776.1 1739.3,712.3 1739.9,695.0 1740.5,720.7 1741.1,750.2 1741.7,737.7 1742.2,760.7 1742.8,749.0 1743.4,743.9 1744.0,695.9 1744.5,700.2 1745.1,704.4 1745.7,689.4 1746.3,752.7 1746.9,743.9 1747.4,776.1 1748.0,792.4 1748.6,714.5 1749.2,727.5 1749.7,720.6 1750.3,694.3 1750.9,745.2 1751.5,746.7 1752.1,698.3 1752.6,761.5 1753.2,691.0 1753.8,743.4 1754.4,776.8 1754.9,755.3 1755.5,763.9 1756.1,705.4 1756.7,769.5 1757.3,744.9 1757.8,723.9 1758.4,754.8 1759.0,743.0 1759.6,708.0 1760.1,742.7 1760.7,717.6 1761.3,751.2 1761.9,753.4 1762.5,778.6 1763.0,704.3 1763.6,759.9 1764.2,781.6 1764.8,757.0 1765.4,728.9 1765.9,715.2 1766.5,725.7 1767.1,717.4 1767.7,727.7 1768.2,711.5 1768.8,718.1 1769.4,750.1 1770.0,737.9 1770.6,671.4 1771.1,730.7 1771.7,714.7 1772.3,756.3 1772.9,711.1 1773.4,715.9 1774.0,757.6 1774.6,688.0 1775.2,736.6 1775.8,741.4 1776.3,713.9 1776.9,690.5 1777.5,697.0 1778.1,720.2 1778.6,777.0 1779.2,726.5 1779.8,713.4 1780.4,698.2 1781.0,744.8 1781.5,731.6 1782.1,716.4 1782.7,712.5 1783.3,786.4 1783.8,696.9 1784.4,775.6 1785.0,703.4 1785.6,698.6 1786.2,717.8 1786.7,723.4 1787.3,734.5 1787.9,731.3 1788.5,688.8 1789.0,711.2 1789.6,725.7 1790.2,733.6 1790.8,664.1 1791.4,683.6 1791.9,684.5 1792.5,688.4 1793.1,732.5 1793.7,699.9 1794.2,709.5 1794.8,694.6 1795.4,710.9 1796.0,704.5 1796.6,705.2 1797.1,719.7 1797.7,716.0 1798.3,775.2 1798.9,733.3 1799.4,706.4 1800.0,776.7 1800.6,741.8 1801.2,720.0 1801.8,729.9 1802.3,763.8 1802.9,730.5 1803.5,718.5 1804.1,720.8 1804.6,727.6 1805.2,697.8 1805.8,694.5 1806.4,748.1 1807.0,700.5 1807.5,730.0 1808.1,720.1 1808.7,775.5 1809.3,739.6 1809.8,688.6 1810.4,689.2 1811.0,737.9 1811.6,746.0 1812.2,680.5 1812.7,726.2 1813.3,681.1 1813.9,767.2 1814.5,717.1 1815.1,738.4 1815.6,793.5 1816.2,725.4 1816.8,681.4 1817.4,726.5 1817.9,744.3 1818.5,709.9 1819.1,690.4 1819.7,706.5 1820.3,742.6 1820.8,709.0 1821.4,708.5 1822.0,731.1 1822.6,708.9 1823.1,781.6 1823.7,749.7 1824.3,742.8 1824.9,697.1 1825.5,717.1 1826.0,721.5 1826.6,706.6 1827.2,705.1 1827.8,765.5 1828.3,700.0 1828.9,712.1 1829.5,755.2 1830.1,726.4 1830.7,736.6 1831.2,787.8 1831.8,706.2 1832.4,745.1 1833.0,718.0 1833.5,705.5 1834.1,689.4 1834.7,727.6 1835.3,735.8 1835.9,784.4 1836.4,753.2 1837.0,712.9 1837.6,749.4 1838.2,725.7 1838.7,762.2 1839.3,702.0 1839.9,752.8" fill="none" stroke="rgba(255,255,255,0.92)" stroke-width="1.15" stroke-linejoin="bevel"/><line x1="1447.6" x2="1447.6" y1="439.0" y2="795.5" stroke="#f2ea40" stroke-width="1.3" stroke-dasharray="1 1"/><circle cx="1483" cy="560" r="6" fill="#f6ee18"/><circle cx="1522.8" cy="599.6" r="6" fill="#e01212"/><circle cx="1491" cy="628.7" r="6" fill="#7c32d6"/><circle cx="1448.5" cy="656.2" r="6" fill="#18a2e2"/></svg>
<span style="left:1309.92px;top:429.99px;font-size:19.50px;line-height:19.50px;color:#fff;">-10.0</span>
<span style="left:1309.92px;top:501.19px;font-size:19.50px;line-height:19.50px;color:#fff;">-20.0</span>
<span style="left:1309.92px;top:572.39px;font-size:19.50px;line-height:19.50px;color:#fff;">-30.0</span>
<span style="left:1309.92px;top:643.29px;font-size:19.50px;line-height:19.50px;color:#fff;">-40.0</span>
<span style="left:1309.92px;top:714.49px;font-size:19.50px;line-height:19.50px;color:#fff;">-50.0</span>
<span style="left:1309.92px;top:785.29px;font-size:19.50px;line-height:19.50px;color:#fff;">-60.0</span>
<span style="left:1376.98px;top:803.54px;font-size:14.60px;line-height:14.60px;color:#f0f0f0;">-60</span>
<span style="left:1408.78px;top:823.84px;font-size:14.60px;line-height:14.60px;color:#f0f0f0;">-40</span>
<span style="left:1440.58px;top:803.54px;font-size:14.60px;line-height:14.60px;color:#f0f0f0;">-20</span>
<span style="left:1478.91px;top:823.84px;font-size:14.60px;line-height:14.60px;color:#f0f0f0;">0</span>
<span style="left:1506.59px;top:803.54px;font-size:14.60px;line-height:14.60px;color:#f0f0f0;">20</span>
<span style="left:1538.61px;top:823.84px;font-size:14.60px;line-height:14.60px;color:#f0f0f0;">40</span>
<span style="left:1570.19px;top:803.54px;font-size:14.60px;line-height:14.60px;color:#f0f0f0;">60</span>
<span style="left:1602.06px;top:823.84px;font-size:14.60px;line-height:14.60px;color:#f0f0f0;">80</span>
<span style="left:1629.55px;top:803.54px;font-size:14.60px;line-height:14.60px;color:#f0f0f0;">100</span>
<span style="left:1661.35px;top:823.84px;font-size:14.60px;line-height:14.60px;color:#f0f0f0;">120</span>
<span style="left:1693.15px;top:803.54px;font-size:14.60px;line-height:14.60px;color:#f0f0f0;">140</span>
<span style="left:1724.95px;top:823.84px;font-size:14.60px;line-height:14.60px;color:#f0f0f0;">160</span>
<span style="left:1756.75px;top:803.54px;font-size:14.60px;line-height:14.60px;color:#f0f0f0;">180</span>
<span style="left:1788.74px;top:823.84px;font-size:14.60px;line-height:14.60px;color:#f0f0f0;">200</span>
<span style="left:1820.54px;top:803.54px;font-size:14.60px;line-height:14.60px;color:#f0f0f0;">220</span>
<span style="left:1491.59px;top:846.17px;font-size:20.00px;line-height:20.00px;color:#fff;transform:scaleX(1.0092);transform-origin:0 0;">Distance Difference (km)</span>
<span style="left:1267.52px;top:686.12px;font-size:21px;line-height:21px;color:#fff;transform-origin:0 0;transform:rotate(-90deg) scaleX(0.9630)">Magnitude (dB)</span>
</div></body></html>
